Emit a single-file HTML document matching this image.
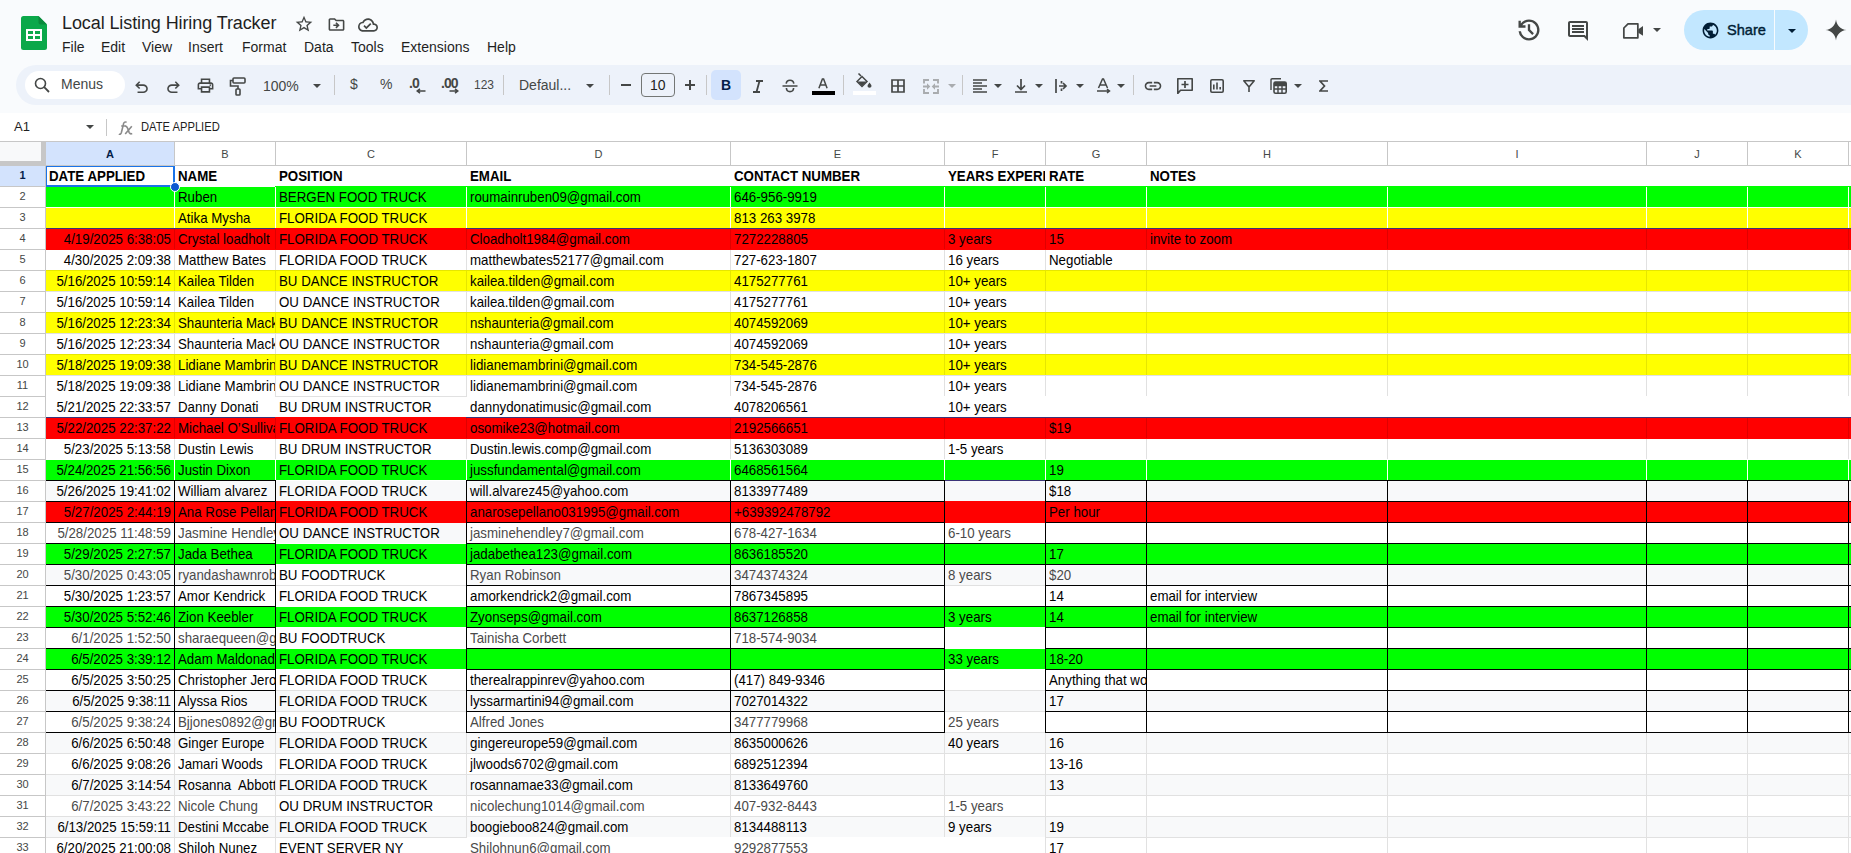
<!DOCTYPE html>
<html><head><meta charset="utf-8">
<style>
*{margin:0;padding:0;box-sizing:border-box}
html,body{width:1851px;height:853px;overflow:hidden;background:#fff;font-family:"Liberation Sans",sans-serif;position:relative}
.abs{position:absolute}
#top{position:absolute;left:0;top:0;width:1851px;height:113px;background:#f9fbfd}
.title{position:absolute;left:62px;top:13px;font-size:18px;color:#1f1f1f;white-space:nowrap;letter-spacing:-0.1px}
.menu{position:absolute;top:39px;font-size:14px;color:#1f1f1f;white-space:nowrap}
.ico{position:absolute}
#tb{position:absolute;left:16px;top:65px;width:1860px;height:40px;background:#edf2fa;border-radius:20px}
.tt{position:absolute;font-size:14px;color:#444746;white-space:nowrap}
.div{position:absolute;width:1px;height:20px;top:75px;background:#c7c7c7}
.tri{position:absolute;width:0;height:0;border-left:4.5px solid transparent;border-right:4.5px solid transparent;border-top:4.5px solid #444746;margin-left:0.5px}
#fb{position:absolute;left:0;top:113px;width:1851px;height:28px;background:#fff}
.rh{position:absolute;left:0;width:45px;font-size:11px;text-align:center;line-height:18px}
.strip{position:absolute;left:46px;width:1805px}
.hl{position:absolute;left:46px;width:1805px;height:1px}
.vl{position:absolute;width:1px}
.c{position:absolute;overflow:hidden;white-space:nowrap;font-size:13.3px;color:#000;line-height:20px;padding:0 3px 0 3px}
.c span{display:inline-block;position:relative;top:1px;transform:scaleY(1.08);transform-origin:0 14.5px}
.ch{position:absolute;top:142px;height:23px;font-size:11px;text-align:center;line-height:23px;padding-top:1px}
.chl{position:absolute;top:142px;width:1px;height:23px;background:#c7c7c7}
</style></head><body>
<div id="top"></div>
<!-- sheets logo -->
<svg class="ico" style="left:21px;top:16px" width="26" height="34" viewBox="0 0 26 34">
<path d="M2.5 0H17.5L26 8.5V31.5Q26 34 23.5 34H2.5Q0 34 0 31.5V2.5Q0 0 2.5 0Z" fill="#0ba84a"/>
<path d="M17.5 0V6.5Q17.5 8.5 19.5 8.5H26Z" fill="#0a8a3c"/>
<rect x="5" y="13" width="16" height="12" fill="#fff"/>
<rect x="7" y="15" width="5" height="3" fill="#0ba84a"/><rect x="14" y="15" width="5" height="3" fill="#0ba84a"/>
<rect x="7" y="20" width="5" height="3" fill="#0ba84a"/><rect x="14" y="20" width="5" height="3" fill="#0ba84a"/>
</svg>
<div class="title">Local Listing Hiring Tracker</div>
<!-- star / folder / cloud -->
<svg class="ico" style="left:294px;top:14px" width="20" height="20" viewBox="0 0 24 24"><path fill="#444746" d="M22 9.24l-7.19-.62L12 2 9.19 8.63 2 9.24l5.46 4.73L5.82 21 12 17.27 18.18 21l-1.63-7.03L22 9.24zM12 15.4l-3.76 2.27 1-4.28-3.32-2.88 4.38-.38L12 6.1l1.71 4.04 4.38.38-3.32 2.88 1 4.28L12 15.4z"/></svg>
<svg class="ico" style="left:326.5px;top:15px" width="19" height="19" viewBox="0 0 24 24"><path fill="#444746" d="M20 6h-8l-2-2H4c-1.1 0-1.99.9-1.99 2L2 18c0 1.1.9 2 2 2h16c1.1 0 2-.9 2-2V8c0-1.1-.9-2-2-2zm0 12H4V6h5.17l2 2H20v10zm-7.84-6H8v2h4.16l-1.59 1.59L11.99 17 16 13.01 11.99 9l-1.41 1.41L12.16 12z"/></svg>
<svg class="ico" style="left:358px;top:15px" width="20" height="20" viewBox="0 0 24 24"><path fill="#444746" d="M19.35 10.04C18.67 6.59 15.64 4 12 4 9.11 4 6.6 5.64 5.350 8.04 2.34 8.36 0 10.91 0 14c0 3.31 2.690 6 6 6h13c2.76 0 5-2.24 5-5 0-2.64-2.05-4.78-4.65-4.96zM19 18H6c-2.21 0-4-1.79-4-4 0-2.05 1.53-3.76 3.56-3.97l1.07-.11.5-.95C8.08 7.14 9.94 6 12 6c2.62 0 4.88 1.86 5.39 4.43l.3 1.5 1.53.11c1.56.1 2.78 1.41 2.78 2.96 0 1.65-1.35 3-3 3zm-9-3.82l-2.09-2.09L6.5 13.5 10 17l6.01-6.01-1.41-1.41z"/></svg>
<div class="menu" style="left:62px">File</div>
<div class="menu" style="left:101px">Edit</div>
<div class="menu" style="left:142px">View</div>
<div class="menu" style="left:188px">Insert</div>
<div class="menu" style="left:242px">Format</div>
<div class="menu" style="left:304px">Data</div>
<div class="menu" style="left:351px">Tools</div>
<div class="menu" style="left:401px">Extensions</div>
<div class="menu" style="left:487px">Help</div>
<!-- right top -->
<svg class="ico" style="left:1515px;top:16px" width="28" height="28" viewBox="0 -960 960 960"><path fill="#444746" d="M480-120q-138 0-240.5-91.5T122-440h82q14 104 92.5 172T480-200q117 0 198.5-81.5T760-480q0-117-81.5-198.5T480-760q-69 0-129 32t-101 88h110v80H120v-240h80v94q51-64 124.5-99T480-840q75 0 140.5 28.5t114 77q48.5 48.5 77 114T840-480q0 75-28.5 140.5t-77 114q-48.5 48.5-114 77T480-120Zm112-192L440-464v-216h80v184l128 128-56 56Z"/></svg>
<svg class="ico" style="left:1566px;top:19px" width="24" height="24" viewBox="0 0 24 24"><path fill="#444746" d="M21.99 4c0-1.1-.89-2-1.990-2H4c-1.1 0-2 .9-2 2v12c0 1.1.9 2 2 2h14l4 4-.01-18zM20 4v13.17L18.83 16H4V4h16zM6 12h12v2H6zm0-3h12v2H6zm0-3h12v2H6z"/></svg>
<svg class="ico" style="left:1622px;top:22px" width="22" height="18" viewBox="0 0 22 18"><path d="M6 1.85H15.85V15.85H1.85V6Z" fill="none" stroke="#444746" stroke-width="1.75" stroke-linejoin="round"/><path d="M16.3 7.2L21 4V13.8L16.3 10.8Z" fill="#444746"/></svg>
<div class="tri" style="left:1652px;top:28px"></div>
<div class="abs" style="left:1684px;top:10px;width:124px;height:40px;border-radius:20px;background:#c2e7ff"></div>
<div class="abs" style="left:1774px;top:10px;width:1px;height:40px;background:#f9fbfd"></div>
<svg class="ico" style="left:1701px;top:21px" width="19" height="19" viewBox="0 0 24 24"><path fill="#001d35" d="M12 2C6.48 2 2 6.48 2 12s4.48 10 10 10 10-4.48 10-10S17.52 2 12 2zm-1 17.930c-3.95-.49-7-3.85-7-7.93 0-.62.08-1.21.21-1.79L9 15v1c0 1.1.9 2 2 2v1.93zm6.9-2.54c-.26-.81-1-1.39-1.9-1.39h-1v-3c0-.55-.45-1-1-1H8v-2h2c.55 0 1-.45 1-1V7h2c1.1 0 2-.9 2-2v-.41c2.93 1.19 5 4.06 5 7.41 0 2.08-.8 3.97-2.1 5.39z"/></svg>
<div class="abs" style="left:1727px;top:22px;font-size:14.6px;color:#001d35;-webkit-text-stroke:0.4px #001d35;white-space:nowrap">Share</div>
<div class="tri" style="left:1787px;top:29px;border-top-color:#001d35"></div>
<svg class="ico" style="left:1824px;top:18px" width="24" height="24" viewBox="0 0 24 24"><path fill="#444746" d="M12 1.5C12.5 7.2 16.8 11.5 22.5 12 16.8 12.5 12.5 16.8 12 22.5 11.5 16.8 7.2 12.5 1.5 12 7.2 11.5 11.5 7.2 12 1.5Z"/></svg>

<!-- toolbar -->
<div id="tb"></div>
<div class="abs" style="left:25px;top:71px;width:100px;height:28px;border-radius:14px;background:#fff"></div>
<svg class="ico" style="left:34px;top:77px" width="16" height="16" viewBox="0 0 16 16"><circle cx="6.5" cy="6.5" r="5" fill="none" stroke="#444746" stroke-width="1.6"/><path d="M10.2 10.2L15 15" stroke="#444746" stroke-width="1.8"/></svg>
<div class="tt" style="left:61px;top:76px">Menus</div>
<svg class="ico" style="left:132px;top:78px" width="19" height="19" viewBox="0 -960 960 960"><path fill="#444746" d="M280-200v-80h284q63 0 109.5-40T720-420q0-60-46.5-100T564-560H312l104 104-56 56-200-200 200-200 56 56-104 104h252q97 0 166.5 63T800-420q0 94-69.5 157T564-200H280Z"/></svg>
<svg class="ico" style="left:164px;top:78px" width="19" height="19" viewBox="0 -960 960 960"><path fill="#444746" d="M396-200q-97 0-166.5-63T160-420q0-94 69.5-157T396-640h252L544-744l56-56 200 200-200 200-56-56 104-104H396q-63 0-109.5 40T240-420q0 60 46.5 100T396-280h284v80H396Z"/></svg>
<svg class="ico" style="left:196px;top:76px" width="19" height="19" viewBox="0 -960 960 960"><path fill="#444746" d="M640-640v-120H320v120h-80v-200h480v200h-80Zm-480 80h640-640Zm560 100q17 0 28.5-11.5T760-500q0-17-11.5-28.5T720-540q-17 0-28.5 11.5T680-500q0 17 11.5 28.5T720-460Zm-80 260v-160H320v160h320Zm80 80H240v-160H80v-240q0-51 35-85.5t85-34.5h560q51 0 85.5 34.5T880-520v240H720v160Zm80-240v-160q0-17-11.5-28.5T760-560H200q-17 0-28.5 11.5T160-520v160h80v-80h480v80h80Z"/></svg>
<svg class="ico" style="left:229px;top:77px" width="17" height="19" viewBox="0 0 17 19"><rect x="4" y="1" width="12" height="5" rx="1" fill="none" stroke="#444746" stroke-width="1.6"/><path d="M4 3.5H1.5V9H9V12" fill="none" stroke="#444746" stroke-width="1.6"/><rect x="7" y="12" width="4" height="6" rx="0.8" fill="none" stroke="#444746" stroke-width="1.6"/></svg>
<div class="tt" style="left:263px;top:78px">100%</div>
<div class="tri" style="left:312px;top:84px"></div>
<div class="div" style="left:334px"></div>
<div class="tt" style="left:350px;top:76px;font-size:14px">$</div>
<div class="tt" style="left:380px;top:76px;font-size:14px">%</div>
<div class="tt" style="left:409px;top:75px;font-size:14px;font-weight:bold;letter-spacing:-1px">.0</div>
<svg class="ico" style="left:416px;top:88px" width="10" height="6" viewBox="0 0 10 6"><path d="M9.5 3H2M4 0.8L1.2 3L4 5.2" fill="none" stroke="#444746" stroke-width="1.5"/></svg>
<div class="tt" style="left:441px;top:75px;font-size:14px;font-weight:bold;letter-spacing:-1px">.00</div>
<svg class="ico" style="left:449px;top:88px" width="10" height="6" viewBox="0 0 10 6"><path d="M0.5 3H8M6 0.8L8.8 3L6 5.2" fill="none" stroke="#444746" stroke-width="1.5"/></svg>
<div class="tt" style="left:474px;top:78px;font-size:12px">123</div>
<div class="div" style="left:503px"></div>
<div class="tt" style="left:519px;top:77px">Defaul...</div>
<div class="tri" style="left:585px;top:84px"></div>
<div class="div" style="left:609px"></div>
<div class="abs" style="left:621px;top:84px;width:10px;height:2px;background:#444746"></div>
<div class="abs" style="left:641px;top:73px;width:34px;height:24px;border:1px solid #747775;border-radius:4px"></div>
<div class="tt" style="left:650px;top:77px;color:#1f1f1f">10</div>
<div class="abs" style="left:685px;top:84px;width:10px;height:2px;background:#444746"></div>
<div class="abs" style="left:689px;top:80px;width:2px;height:10px;background:#444746"></div>
<div class="div" style="left:706px"></div>
<div class="abs" style="left:711px;top:70px;width:30px;height:30px;border-radius:5px;background:#d3e3fd"></div>
<div class="tt" style="left:721px;top:77px;font-size:14px;font-weight:bold;color:#041e49">B</div>
<svg class="ico" style="left:752px;top:80px" width="12" height="13" viewBox="0 0 12 13"><path d="M4 1H11M1 12H8M7.5 1L4.5 12" fill="none" stroke="#444746" stroke-width="1.8"/></svg>
<svg class="ico" style="left:781px;top:79px" width="18" height="14" viewBox="0 0 18 14"><path d="M1.5 7H16.5" stroke="#444746" stroke-width="1.5"/><path d="M5.2 4.6Q5.6 1.3 9 1.3Q12.4 1.3 12.8 4.6M5.4 9Q5.6 12.6 9 12.6Q12.4 12.6 12.6 9" fill="none" stroke="#444746" stroke-width="1.6"/></svg>
<svg class="ico" style="left:818px;top:78px" width="10" height="11" viewBox="0 0 10 11"><path d="M0.9 10.3L4.4 0.9H5.6L9.1 10.3M2.3 7H7.7" fill="none" stroke="#444746" stroke-width="1.5"/></svg>
<div class="abs" style="left:812px;top:91px;width:23px;height:4px;background:#000"></div>
<div class="div" style="left:843px"></div>
<svg class="ico" style="left:855px;top:73px" width="17" height="16" viewBox="0 0 17 16"><path d="M3.5 0.5L6 3M2 8.5L7 3.5L12 8.5L7 13.5Z" fill="none" stroke="#444746" stroke-width="1.5"/><path d="M2.5 8.5H11.5L7 13Z" fill="#444746"/><path d="M14.5 9.5Q16.5 12 16.5 13Q16.5 14.8 14.5 14.8Q12.5 14.8 12.5 13Q12.5 12 14.5 9.5Z" fill="#444746"/></svg>
<div class="abs" style="left:853px;top:91px;width:23px;height:4px;background:#fff"></div>
<svg class="ico" style="left:891px;top:79px" width="14" height="14" viewBox="0 0 14 14"><path d="M1 1H13V13H1ZM7 1V13M1 7H13" fill="none" stroke="#444746" stroke-width="1.7"/></svg>
<svg class="ico" style="left:923px;top:79px" width="16" height="15" viewBox="0 0 16 15"><path d="M6 1H1V4.5M1 10V14H6M10 1H15V4.5M15 10V14H10M0 7.5H4.5M16 7.5H11.5" fill="none" stroke="#a9acaf" stroke-width="1.9"/><path d="M4 4.2L7.3 7.5L4 10.8ZM12 4.2L8.7 7.5L12 10.8Z" fill="#a9acaf"/></svg>
<div class="tri" style="left:947px;top:84px;border-top-color:#a9acaf"></div>
<div class="div" style="left:962px"></div>
<svg class="ico" style="left:973px;top:79px" width="14" height="14" viewBox="0 0 14 14"><path d="M0 1H14M0 4H9M0 7H14M0 10H9M0 13H14" stroke="#444746" stroke-width="1.6"/></svg>
<div class="tri" style="left:993px;top:84px"></div>
<svg class="ico" style="left:1015px;top:79px" width="12" height="14" viewBox="0 0 12 14"><path d="M6 0V10M2 6.5L6 10.5L10 6.5M0 13H12" fill="none" stroke="#444746" stroke-width="1.7"/></svg>
<div class="tri" style="left:1034px;top:84px"></div>
<svg class="ico" style="left:1055px;top:79px" width="13" height="14" viewBox="0 0 13 14"><path d="M1 0V14" stroke="#444746" stroke-width="1.7"/><path d="M4 7H11M8 4L11 7L8 10" fill="none" stroke="#444746" stroke-width="1.7"/><path d="M6.5 2V4.5M6.5 9.5V12" stroke="#444746" stroke-width="1.7"/></svg>
<div class="tri" style="left:1075px;top:84px"></div>
<svg class="ico" style="left:1097px;top:78px" width="14" height="16" viewBox="0 0 14 16"><path d="M1.5 10L5.5 1H6.5L10.5 10M3 7H9" fill="none" stroke="#444746" stroke-width="1.5"/><path d="M0 13H12M10 11L12.5 13L10 15" fill="none" stroke="#444746" stroke-width="1.5"/></svg>
<div class="tri" style="left:1116px;top:84px"></div>
<div class="div" style="left:1133px"></div>
<svg class="ico" style="left:1143px;top:76px" width="20" height="20" viewBox="0 0 24 24"><path fill="#444746" d="M3.9 12c0-1.71 1.39-3.1 3.1-3.1h4V7H7c-2.76 0-5 2.24-5 5s2.24 5 5 5h4v-1.9H7c-1.71 0-3.1-1.39-3.1-3.1zM8 13h8v-2H8v2zm9-6h-4v1.9h4c1.71 0 3.1 1.39 3.1 3.1s-1.39 3.1-3.1 3.1h-4V17h4c2.76 0 5-2.24 5-5s-2.24-5-5-5z"/></svg>
<svg class="ico" style="left:1177px;top:78px" width="16" height="16" viewBox="0 0 16 16"><path d="M0.8 15.5V0.8H15.2V12.2H3.5Z" fill="none" stroke="#444746" stroke-width="1.6" stroke-linejoin="round"/><path d="M8 3V10M4.5 6.5H11.5" stroke="#444746" stroke-width="1.7"/></svg>
<svg class="ico" style="left:1210px;top:79px" width="14" height="14" viewBox="0 0 14 14"><rect x="0.8" y="0.8" width="12.4" height="12.4" rx="1.2" fill="none" stroke="#444746" stroke-width="1.6"/><path d="M3.8 5.5V10.5M7 3.5V10.5M10.2 8V10.5" stroke="#444746" stroke-width="1.6"/></svg>
<svg class="ico" style="left:1243px;top:80px" width="12" height="12" viewBox="0 0 12 12"><path d="M0.8 0.8H11.2L6 7ZM6 7V12" fill="none" stroke="#444746" stroke-width="1.6" stroke-linejoin="round"/></svg>
<svg class="ico" style="left:1270px;top:78px" width="17" height="16" viewBox="0 0 17 16"><path d="M1 12V2Q1 0.8 2.2 0.8H11" fill="none" stroke="#444746" stroke-width="1.4"/><rect x="4" y="4" width="12.2" height="11.2" rx="1.5" fill="none" stroke="#444746" stroke-width="1.6"/><path d="M4 7.5H16M4 11H16M8 7.5V15M12 7.5V15" stroke="#444746" stroke-width="1.4"/><rect x="4" y="4" width="12" height="3.5" fill="#444746"/></svg>
<div class="tri" style="left:1293px;top:84px"></div>
<svg class="ico" style="left:1319px;top:80px" width="9" height="12" viewBox="0 0 9 12"><path d="M9 1H1L5.5 6L1 11H9" fill="none" stroke="#444746" stroke-width="1.7"/></svg>

<!-- formula bar -->
<div id="fb"></div>
<div class="abs" style="left:14px;top:119px;font-size:13px;color:#1f1f1f">A1</div>
<div class="tri" style="left:85px;top:125px"></div>
<div class="abs" style="left:106px;top:119px;width:1px;height:17px;background:#c7c7c7"></div>
<svg class="ico" style="left:118px;top:121px" width="15" height="14" viewBox="0 0 15 14"><path d="M0.8 13.2Q2.6 14 3.4 11.5L5.6 2.6Q6.3 0.4 8.6 1.2M3.2 5H7.6" fill="none" stroke="#8a8a8a" stroke-width="1.6"/><path d="M7 5.2Q8.6 4.6 9.6 7.2L11.2 11.6Q12.2 13.4 14.2 12.6M13.8 5.2L7.2 13" fill="none" stroke="#8a8a8a" stroke-width="1.6"/></svg>
<div class="abs" style="left:141px;top:121px;font-size:11.2px;color:#1f1f1f;white-space:nowrap;transform:scaleY(1.12);transform-origin:0 10px">DATE APPLIED</div>

<!-- header area -->
<div class="abs" style="left:0;top:141px;width:1851px;height:1px;background:#c7c7c7"></div>
<div class="abs" style="left:0;top:142px;width:41px;height:19px;background:#f8f9fa"></div>
<div class="abs" style="left:41px;top:142px;width:5px;height:24px;background:#c7c7c7"></div>
<div class="abs" style="left:0;top:161px;width:46px;height:5px;background:#c7c7c7"></div>
<div class="rh" style="top:166px;height:20px;background:#d3e3fd;color:#041e49;font-weight:bold">1</div>
<div class="abs" style="left:0;top:186px;width:45px;height:1px;background:#c7c7c7"></div>
<div class="rh" style="top:187px;height:20px;background:#ffffff;color:#444746;font-weight:normal">2</div>
<div class="abs" style="left:0;top:207px;width:45px;height:1px;background:#c7c7c7"></div>
<div class="rh" style="top:208px;height:20px;background:#ffffff;color:#444746;font-weight:normal">3</div>
<div class="abs" style="left:0;top:228px;width:45px;height:1px;background:#c7c7c7"></div>
<div class="rh" style="top:229px;height:20px;background:#ffffff;color:#444746;font-weight:normal">4</div>
<div class="abs" style="left:0;top:249px;width:45px;height:1px;background:#c7c7c7"></div>
<div class="rh" style="top:250px;height:20px;background:#ffffff;color:#444746;font-weight:normal">5</div>
<div class="abs" style="left:0;top:270px;width:45px;height:1px;background:#c7c7c7"></div>
<div class="rh" style="top:271px;height:20px;background:#ffffff;color:#444746;font-weight:normal">6</div>
<div class="abs" style="left:0;top:291px;width:45px;height:1px;background:#c7c7c7"></div>
<div class="rh" style="top:292px;height:20px;background:#ffffff;color:#444746;font-weight:normal">7</div>
<div class="abs" style="left:0;top:312px;width:45px;height:1px;background:#c7c7c7"></div>
<div class="rh" style="top:313px;height:20px;background:#ffffff;color:#444746;font-weight:normal">8</div>
<div class="abs" style="left:0;top:333px;width:45px;height:1px;background:#c7c7c7"></div>
<div class="rh" style="top:334px;height:20px;background:#ffffff;color:#444746;font-weight:normal">9</div>
<div class="abs" style="left:0;top:354px;width:45px;height:1px;background:#c7c7c7"></div>
<div class="rh" style="top:355px;height:20px;background:#ffffff;color:#444746;font-weight:normal">10</div>
<div class="abs" style="left:0;top:375px;width:45px;height:1px;background:#c7c7c7"></div>
<div class="rh" style="top:376px;height:20px;background:#ffffff;color:#444746;font-weight:normal">11</div>
<div class="abs" style="left:0;top:396px;width:45px;height:1px;background:#c7c7c7"></div>
<div class="rh" style="top:397px;height:20px;background:#ffffff;color:#444746;font-weight:normal">12</div>
<div class="abs" style="left:0;top:417px;width:45px;height:1px;background:#c7c7c7"></div>
<div class="rh" style="top:418px;height:20px;background:#ffffff;color:#444746;font-weight:normal">13</div>
<div class="abs" style="left:0;top:438px;width:45px;height:1px;background:#c7c7c7"></div>
<div class="rh" style="top:439px;height:20px;background:#ffffff;color:#444746;font-weight:normal">14</div>
<div class="abs" style="left:0;top:459px;width:45px;height:1px;background:#c7c7c7"></div>
<div class="rh" style="top:460px;height:20px;background:#ffffff;color:#444746;font-weight:normal">15</div>
<div class="abs" style="left:0;top:480px;width:45px;height:1px;background:#c7c7c7"></div>
<div class="rh" style="top:481px;height:20px;background:#ffffff;color:#444746;font-weight:normal">16</div>
<div class="abs" style="left:0;top:501px;width:45px;height:1px;background:#c7c7c7"></div>
<div class="rh" style="top:502px;height:20px;background:#ffffff;color:#444746;font-weight:normal">17</div>
<div class="abs" style="left:0;top:522px;width:45px;height:1px;background:#c7c7c7"></div>
<div class="rh" style="top:523px;height:20px;background:#ffffff;color:#444746;font-weight:normal">18</div>
<div class="abs" style="left:0;top:543px;width:45px;height:1px;background:#c7c7c7"></div>
<div class="rh" style="top:544px;height:20px;background:#ffffff;color:#444746;font-weight:normal">19</div>
<div class="abs" style="left:0;top:564px;width:45px;height:1px;background:#c7c7c7"></div>
<div class="rh" style="top:565px;height:20px;background:#ffffff;color:#444746;font-weight:normal">20</div>
<div class="abs" style="left:0;top:585px;width:45px;height:1px;background:#c7c7c7"></div>
<div class="rh" style="top:586px;height:20px;background:#ffffff;color:#444746;font-weight:normal">21</div>
<div class="abs" style="left:0;top:606px;width:45px;height:1px;background:#c7c7c7"></div>
<div class="rh" style="top:607px;height:20px;background:#ffffff;color:#444746;font-weight:normal">22</div>
<div class="abs" style="left:0;top:627px;width:45px;height:1px;background:#c7c7c7"></div>
<div class="rh" style="top:628px;height:20px;background:#ffffff;color:#444746;font-weight:normal">23</div>
<div class="abs" style="left:0;top:648px;width:45px;height:1px;background:#c7c7c7"></div>
<div class="rh" style="top:649px;height:20px;background:#ffffff;color:#444746;font-weight:normal">24</div>
<div class="abs" style="left:0;top:669px;width:45px;height:1px;background:#c7c7c7"></div>
<div class="rh" style="top:670px;height:20px;background:#ffffff;color:#444746;font-weight:normal">25</div>
<div class="abs" style="left:0;top:690px;width:45px;height:1px;background:#c7c7c7"></div>
<div class="rh" style="top:691px;height:20px;background:#ffffff;color:#444746;font-weight:normal">26</div>
<div class="abs" style="left:0;top:711px;width:45px;height:1px;background:#c7c7c7"></div>
<div class="rh" style="top:712px;height:20px;background:#ffffff;color:#444746;font-weight:normal">27</div>
<div class="abs" style="left:0;top:732px;width:45px;height:1px;background:#c7c7c7"></div>
<div class="rh" style="top:733px;height:20px;background:#ffffff;color:#444746;font-weight:normal">28</div>
<div class="abs" style="left:0;top:753px;width:45px;height:1px;background:#c7c7c7"></div>
<div class="rh" style="top:754px;height:20px;background:#ffffff;color:#444746;font-weight:normal">29</div>
<div class="abs" style="left:0;top:774px;width:45px;height:1px;background:#c7c7c7"></div>
<div class="rh" style="top:775px;height:20px;background:#ffffff;color:#444746;font-weight:normal">30</div>
<div class="abs" style="left:0;top:795px;width:45px;height:1px;background:#c7c7c7"></div>
<div class="rh" style="top:796px;height:20px;background:#ffffff;color:#444746;font-weight:normal">31</div>
<div class="abs" style="left:0;top:816px;width:45px;height:1px;background:#c7c7c7"></div>
<div class="rh" style="top:817px;height:20px;background:#ffffff;color:#444746;font-weight:normal">32</div>
<div class="abs" style="left:0;top:837px;width:45px;height:1px;background:#c7c7c7"></div>
<div class="rh" style="top:838px;height:20px;background:#ffffff;color:#444746;font-weight:normal">33</div>
<div class="abs" style="left:0;top:858px;width:45px;height:1px;background:#c7c7c7"></div>
<div class="abs" style="left:46px;top:187px;width:128px;height:20px;background:#00ff00"></div>
<div class="abs" style="left:175px;top:187px;width:100px;height:20px;background:#00ff00"></div>
<div class="abs" style="left:276px;top:187px;width:190px;height:20px;background:#00ff00"></div>
<div class="abs" style="left:467px;top:187px;width:263px;height:20px;background:#00ff00"></div>
<div class="abs" style="left:731px;top:187px;width:213px;height:20px;background:#00ff00"></div>
<div class="abs" style="left:945px;top:187px;width:100px;height:20px;background:#00ff00"></div>
<div class="abs" style="left:1046px;top:187px;width:100px;height:20px;background:#00ff00"></div>
<div class="abs" style="left:1147px;top:187px;width:240px;height:20px;background:#00ff00"></div>
<div class="abs" style="left:1388px;top:187px;width:258px;height:20px;background:#00ff00"></div>
<div class="abs" style="left:1647px;top:187px;width:100px;height:20px;background:#00ff00"></div>
<div class="abs" style="left:1748px;top:187px;width:100px;height:20px;background:#00ff00"></div>
<div class="abs" style="left:1849px;top:187px;width:2px;height:20px;background:#00ff00"></div>
<div class="abs" style="left:46px;top:208px;width:128px;height:20px;background:#ffff00"></div>
<div class="abs" style="left:175px;top:208px;width:100px;height:20px;background:#ffff00"></div>
<div class="abs" style="left:276px;top:208px;width:190px;height:20px;background:#ffff00"></div>
<div class="abs" style="left:467px;top:208px;width:263px;height:20px;background:#ffff00"></div>
<div class="abs" style="left:731px;top:208px;width:213px;height:20px;background:#ffff00"></div>
<div class="abs" style="left:945px;top:208px;width:100px;height:20px;background:#ffff00"></div>
<div class="abs" style="left:1046px;top:208px;width:100px;height:20px;background:#ffff00"></div>
<div class="abs" style="left:1147px;top:208px;width:240px;height:20px;background:#ffff00"></div>
<div class="abs" style="left:1388px;top:208px;width:258px;height:20px;background:#ffff00"></div>
<div class="abs" style="left:1647px;top:208px;width:100px;height:20px;background:#ffff00"></div>
<div class="abs" style="left:1748px;top:208px;width:100px;height:20px;background:#ffff00"></div>
<div class="abs" style="left:1849px;top:208px;width:2px;height:20px;background:#ffff00"></div>
<div class="abs" style="left:46px;top:229px;width:128px;height:20px;background:#ff0000"></div>
<div class="abs" style="left:175px;top:229px;width:100px;height:20px;background:#ff0000"></div>
<div class="abs" style="left:276px;top:229px;width:190px;height:20px;background:#ff0000"></div>
<div class="abs" style="left:467px;top:229px;width:263px;height:20px;background:#ff0000"></div>
<div class="abs" style="left:731px;top:229px;width:213px;height:20px;background:#ff0000"></div>
<div class="abs" style="left:945px;top:229px;width:100px;height:20px;background:#ff0000"></div>
<div class="abs" style="left:1046px;top:229px;width:100px;height:20px;background:#ff0000"></div>
<div class="abs" style="left:1147px;top:229px;width:240px;height:20px;background:#ff0000"></div>
<div class="abs" style="left:1388px;top:229px;width:258px;height:20px;background:#ff0000"></div>
<div class="abs" style="left:1647px;top:229px;width:100px;height:20px;background:#ff0000"></div>
<div class="abs" style="left:1748px;top:229px;width:100px;height:20px;background:#ff0000"></div>
<div class="abs" style="left:1849px;top:229px;width:2px;height:20px;background:#ff0000"></div>
<div class="abs" style="left:46px;top:271px;width:128px;height:20px;background:#ffff00"></div>
<div class="abs" style="left:175px;top:271px;width:100px;height:20px;background:#ffff00"></div>
<div class="abs" style="left:276px;top:271px;width:190px;height:20px;background:#ffff00"></div>
<div class="abs" style="left:467px;top:271px;width:263px;height:20px;background:#ffff00"></div>
<div class="abs" style="left:731px;top:271px;width:213px;height:20px;background:#ffff00"></div>
<div class="abs" style="left:945px;top:271px;width:100px;height:20px;background:#ffff00"></div>
<div class="abs" style="left:1046px;top:271px;width:100px;height:20px;background:#ffff00"></div>
<div class="abs" style="left:1147px;top:271px;width:240px;height:20px;background:#ffff00"></div>
<div class="abs" style="left:1388px;top:271px;width:258px;height:20px;background:#ffff00"></div>
<div class="abs" style="left:1647px;top:271px;width:100px;height:20px;background:#ffff00"></div>
<div class="abs" style="left:1748px;top:271px;width:100px;height:20px;background:#ffff00"></div>
<div class="abs" style="left:1849px;top:271px;width:2px;height:20px;background:#ffff00"></div>
<div class="abs" style="left:46px;top:313px;width:128px;height:20px;background:#ffff00"></div>
<div class="abs" style="left:175px;top:313px;width:100px;height:20px;background:#ffff00"></div>
<div class="abs" style="left:276px;top:313px;width:190px;height:20px;background:#ffff00"></div>
<div class="abs" style="left:467px;top:313px;width:263px;height:20px;background:#ffff00"></div>
<div class="abs" style="left:731px;top:313px;width:213px;height:20px;background:#ffff00"></div>
<div class="abs" style="left:945px;top:313px;width:100px;height:20px;background:#ffff00"></div>
<div class="abs" style="left:1046px;top:313px;width:100px;height:20px;background:#ffff00"></div>
<div class="abs" style="left:1147px;top:313px;width:240px;height:20px;background:#ffff00"></div>
<div class="abs" style="left:1388px;top:313px;width:258px;height:20px;background:#ffff00"></div>
<div class="abs" style="left:1647px;top:313px;width:100px;height:20px;background:#ffff00"></div>
<div class="abs" style="left:1748px;top:313px;width:100px;height:20px;background:#ffff00"></div>
<div class="abs" style="left:1849px;top:313px;width:2px;height:20px;background:#ffff00"></div>
<div class="abs" style="left:46px;top:355px;width:128px;height:20px;background:#ffff00"></div>
<div class="abs" style="left:175px;top:355px;width:100px;height:20px;background:#ffff00"></div>
<div class="abs" style="left:276px;top:355px;width:190px;height:20px;background:#ffff00"></div>
<div class="abs" style="left:467px;top:355px;width:263px;height:20px;background:#ffff00"></div>
<div class="abs" style="left:731px;top:355px;width:213px;height:20px;background:#ffff00"></div>
<div class="abs" style="left:945px;top:355px;width:100px;height:20px;background:#ffff00"></div>
<div class="abs" style="left:1046px;top:355px;width:100px;height:20px;background:#ffff00"></div>
<div class="abs" style="left:1147px;top:355px;width:240px;height:20px;background:#ffff00"></div>
<div class="abs" style="left:1388px;top:355px;width:258px;height:20px;background:#ffff00"></div>
<div class="abs" style="left:1647px;top:355px;width:100px;height:20px;background:#ffff00"></div>
<div class="abs" style="left:1748px;top:355px;width:100px;height:20px;background:#ffff00"></div>
<div class="abs" style="left:1849px;top:355px;width:2px;height:20px;background:#ffff00"></div>
<div class="abs" style="left:46px;top:418px;width:128px;height:20px;background:#ff0000"></div>
<div class="abs" style="left:175px;top:418px;width:100px;height:20px;background:#ff0000"></div>
<div class="abs" style="left:276px;top:418px;width:190px;height:20px;background:#ff0000"></div>
<div class="abs" style="left:467px;top:418px;width:263px;height:20px;background:#ff0000"></div>
<div class="abs" style="left:731px;top:418px;width:213px;height:20px;background:#ff0000"></div>
<div class="abs" style="left:945px;top:418px;width:100px;height:20px;background:#ff0000"></div>
<div class="abs" style="left:1046px;top:418px;width:100px;height:20px;background:#ff0000"></div>
<div class="abs" style="left:1147px;top:418px;width:240px;height:20px;background:#ff0000"></div>
<div class="abs" style="left:1388px;top:418px;width:258px;height:20px;background:#ff0000"></div>
<div class="abs" style="left:1647px;top:418px;width:100px;height:20px;background:#ff0000"></div>
<div class="abs" style="left:1748px;top:418px;width:100px;height:20px;background:#ff0000"></div>
<div class="abs" style="left:1849px;top:418px;width:2px;height:20px;background:#ff0000"></div>
<div class="abs" style="left:46px;top:460px;width:128px;height:20px;background:#00ff00"></div>
<div class="abs" style="left:175px;top:460px;width:100px;height:20px;background:#00ff00"></div>
<div class="abs" style="left:276px;top:460px;width:190px;height:20px;background:#00ff00"></div>
<div class="abs" style="left:467px;top:460px;width:263px;height:20px;background:#00ff00"></div>
<div class="abs" style="left:731px;top:460px;width:213px;height:20px;background:#00ff00"></div>
<div class="abs" style="left:945px;top:460px;width:100px;height:20px;background:#00ff00"></div>
<div class="abs" style="left:1046px;top:460px;width:100px;height:20px;background:#00ff00"></div>
<div class="abs" style="left:1147px;top:460px;width:240px;height:20px;background:#00ff00"></div>
<div class="abs" style="left:1388px;top:460px;width:258px;height:20px;background:#00ff00"></div>
<div class="abs" style="left:1647px;top:460px;width:100px;height:20px;background:#00ff00"></div>
<div class="abs" style="left:1748px;top:460px;width:100px;height:20px;background:#00ff00"></div>
<div class="abs" style="left:1849px;top:460px;width:2px;height:20px;background:#00ff00"></div>
<div class="abs" style="left:46px;top:481px;width:128px;height:20px;background:#f8f9fa"></div>
<div class="abs" style="left:175px;top:481px;width:100px;height:20px;background:#f8f9fa"></div>
<div class="abs" style="left:276px;top:481px;width:190px;height:20px;background:#f8f9fa"></div>
<div class="abs" style="left:467px;top:481px;width:263px;height:20px;background:#f8f9fa"></div>
<div class="abs" style="left:731px;top:481px;width:213px;height:20px;background:#f8f9fa"></div>
<div class="abs" style="left:945px;top:481px;width:100px;height:20px;background:#f8f9fa"></div>
<div class="abs" style="left:1046px;top:481px;width:100px;height:20px;background:#f8f9fa"></div>
<div class="abs" style="left:1147px;top:481px;width:240px;height:20px;background:#f8f9fa"></div>
<div class="abs" style="left:1388px;top:481px;width:258px;height:20px;background:#f8f9fa"></div>
<div class="abs" style="left:1647px;top:481px;width:100px;height:20px;background:#f8f9fa"></div>
<div class="abs" style="left:1748px;top:481px;width:100px;height:20px;background:#f8f9fa"></div>
<div class="abs" style="left:1849px;top:481px;width:2px;height:20px;background:#f8f9fa"></div>
<div class="abs" style="left:46px;top:502px;width:128px;height:20px;background:#ff0000"></div>
<div class="abs" style="left:175px;top:502px;width:100px;height:20px;background:#ff0000"></div>
<div class="abs" style="left:276px;top:502px;width:190px;height:20px;background:#ff0000"></div>
<div class="abs" style="left:467px;top:502px;width:263px;height:20px;background:#ff0000"></div>
<div class="abs" style="left:731px;top:502px;width:213px;height:20px;background:#ff0000"></div>
<div class="abs" style="left:945px;top:502px;width:100px;height:20px;background:#ff0000"></div>
<div class="abs" style="left:1046px;top:502px;width:100px;height:20px;background:#ff0000"></div>
<div class="abs" style="left:1147px;top:502px;width:240px;height:20px;background:#ff0000"></div>
<div class="abs" style="left:1388px;top:502px;width:258px;height:20px;background:#ff0000"></div>
<div class="abs" style="left:1647px;top:502px;width:100px;height:20px;background:#ff0000"></div>
<div class="abs" style="left:1748px;top:502px;width:100px;height:20px;background:#ff0000"></div>
<div class="abs" style="left:1849px;top:502px;width:2px;height:20px;background:#ff0000"></div>
<div class="abs" style="left:276px;top:523px;width:190px;height:20px;background:#f8f9fa"></div>
<div class="abs" style="left:46px;top:544px;width:128px;height:20px;background:#00ff00"></div>
<div class="abs" style="left:175px;top:544px;width:100px;height:20px;background:#00ff00"></div>
<div class="abs" style="left:276px;top:544px;width:190px;height:20px;background:#00ff00"></div>
<div class="abs" style="left:467px;top:544px;width:263px;height:20px;background:#00ff00"></div>
<div class="abs" style="left:731px;top:544px;width:213px;height:20px;background:#00ff00"></div>
<div class="abs" style="left:945px;top:544px;width:100px;height:20px;background:#00ff00"></div>
<div class="abs" style="left:1046px;top:544px;width:100px;height:20px;background:#00ff00"></div>
<div class="abs" style="left:1147px;top:544px;width:240px;height:20px;background:#00ff00"></div>
<div class="abs" style="left:1388px;top:544px;width:258px;height:20px;background:#00ff00"></div>
<div class="abs" style="left:1647px;top:544px;width:100px;height:20px;background:#00ff00"></div>
<div class="abs" style="left:1748px;top:544px;width:100px;height:20px;background:#00ff00"></div>
<div class="abs" style="left:1849px;top:544px;width:2px;height:20px;background:#00ff00"></div>
<div class="abs" style="left:46px;top:565px;width:128px;height:20px;background:#f8f9fa"></div>
<div class="abs" style="left:175px;top:565px;width:100px;height:20px;background:#f8f9fa"></div>
<div class="abs" style="left:467px;top:565px;width:263px;height:20px;background:#f8f9fa"></div>
<div class="abs" style="left:731px;top:565px;width:213px;height:20px;background:#f8f9fa"></div>
<div class="abs" style="left:945px;top:565px;width:100px;height:20px;background:#f8f9fa"></div>
<div class="abs" style="left:1046px;top:565px;width:100px;height:20px;background:#f8f9fa"></div>
<div class="abs" style="left:1147px;top:565px;width:240px;height:20px;background:#f8f9fa"></div>
<div class="abs" style="left:1388px;top:565px;width:258px;height:20px;background:#f8f9fa"></div>
<div class="abs" style="left:1647px;top:565px;width:100px;height:20px;background:#f8f9fa"></div>
<div class="abs" style="left:1748px;top:565px;width:100px;height:20px;background:#f8f9fa"></div>
<div class="abs" style="left:1849px;top:565px;width:2px;height:20px;background:#f8f9fa"></div>
<div class="abs" style="left:46px;top:607px;width:128px;height:20px;background:#00ff00"></div>
<div class="abs" style="left:175px;top:607px;width:100px;height:20px;background:#00ff00"></div>
<div class="abs" style="left:276px;top:607px;width:190px;height:20px;background:#00ff00"></div>
<div class="abs" style="left:467px;top:607px;width:263px;height:20px;background:#00ff00"></div>
<div class="abs" style="left:731px;top:607px;width:213px;height:20px;background:#00ff00"></div>
<div class="abs" style="left:945px;top:607px;width:100px;height:20px;background:#00ff00"></div>
<div class="abs" style="left:1046px;top:607px;width:100px;height:20px;background:#00ff00"></div>
<div class="abs" style="left:1147px;top:607px;width:240px;height:20px;background:#00ff00"></div>
<div class="abs" style="left:1388px;top:607px;width:258px;height:20px;background:#00ff00"></div>
<div class="abs" style="left:1647px;top:607px;width:100px;height:20px;background:#00ff00"></div>
<div class="abs" style="left:1748px;top:607px;width:100px;height:20px;background:#00ff00"></div>
<div class="abs" style="left:1849px;top:607px;width:2px;height:20px;background:#00ff00"></div>
<div class="abs" style="left:46px;top:649px;width:128px;height:20px;background:#00ff00"></div>
<div class="abs" style="left:175px;top:649px;width:100px;height:20px;background:#00ff00"></div>
<div class="abs" style="left:276px;top:649px;width:190px;height:20px;background:#00ff00"></div>
<div class="abs" style="left:467px;top:649px;width:263px;height:20px;background:#00ff00"></div>
<div class="abs" style="left:731px;top:649px;width:213px;height:20px;background:#00ff00"></div>
<div class="abs" style="left:945px;top:649px;width:100px;height:20px;background:#00ff00"></div>
<div class="abs" style="left:1046px;top:649px;width:100px;height:20px;background:#00ff00"></div>
<div class="abs" style="left:1147px;top:649px;width:240px;height:20px;background:#00ff00"></div>
<div class="abs" style="left:1388px;top:649px;width:258px;height:20px;background:#00ff00"></div>
<div class="abs" style="left:1647px;top:649px;width:100px;height:20px;background:#00ff00"></div>
<div class="abs" style="left:1748px;top:649px;width:100px;height:20px;background:#00ff00"></div>
<div class="abs" style="left:1849px;top:649px;width:2px;height:20px;background:#00ff00"></div>
<div class="abs" style="left:46px;top:691px;width:128px;height:20px;background:#f8f9fa"></div>
<div class="abs" style="left:175px;top:691px;width:100px;height:20px;background:#f8f9fa"></div>
<div class="abs" style="left:276px;top:691px;width:190px;height:20px;background:#f8f9fa"></div>
<div class="abs" style="left:467px;top:691px;width:263px;height:20px;background:#f8f9fa"></div>
<div class="abs" style="left:731px;top:691px;width:213px;height:20px;background:#f8f9fa"></div>
<div class="abs" style="left:945px;top:691px;width:100px;height:20px;background:#f8f9fa"></div>
<div class="abs" style="left:1046px;top:691px;width:100px;height:20px;background:#f8f9fa"></div>
<div class="abs" style="left:1147px;top:691px;width:240px;height:20px;background:#f8f9fa"></div>
<div class="abs" style="left:1388px;top:691px;width:258px;height:20px;background:#f8f9fa"></div>
<div class="abs" style="left:1647px;top:691px;width:100px;height:20px;background:#f8f9fa"></div>
<div class="abs" style="left:1748px;top:691px;width:100px;height:20px;background:#f8f9fa"></div>
<div class="abs" style="left:1849px;top:691px;width:2px;height:20px;background:#f8f9fa"></div>
<div class="abs" style="left:46px;top:733px;width:128px;height:20px;background:#f8f9fa"></div>
<div class="abs" style="left:175px;top:733px;width:100px;height:20px;background:#f8f9fa"></div>
<div class="abs" style="left:276px;top:733px;width:190px;height:20px;background:#f8f9fa"></div>
<div class="abs" style="left:467px;top:733px;width:263px;height:20px;background:#f8f9fa"></div>
<div class="abs" style="left:731px;top:733px;width:213px;height:20px;background:#f8f9fa"></div>
<div class="abs" style="left:945px;top:733px;width:100px;height:20px;background:#f8f9fa"></div>
<div class="abs" style="left:1046px;top:733px;width:100px;height:20px;background:#f8f9fa"></div>
<div class="abs" style="left:1147px;top:733px;width:240px;height:20px;background:#f8f9fa"></div>
<div class="abs" style="left:1388px;top:733px;width:258px;height:20px;background:#f8f9fa"></div>
<div class="abs" style="left:1647px;top:733px;width:100px;height:20px;background:#f8f9fa"></div>
<div class="abs" style="left:1748px;top:733px;width:100px;height:20px;background:#f8f9fa"></div>
<div class="abs" style="left:1849px;top:733px;width:2px;height:20px;background:#f8f9fa"></div>
<div class="abs" style="left:46px;top:775px;width:128px;height:20px;background:#f8f9fa"></div>
<div class="abs" style="left:175px;top:775px;width:100px;height:20px;background:#f8f9fa"></div>
<div class="abs" style="left:276px;top:775px;width:190px;height:20px;background:#f8f9fa"></div>
<div class="abs" style="left:467px;top:775px;width:263px;height:20px;background:#f8f9fa"></div>
<div class="abs" style="left:731px;top:775px;width:213px;height:20px;background:#f8f9fa"></div>
<div class="abs" style="left:945px;top:775px;width:100px;height:20px;background:#f8f9fa"></div>
<div class="abs" style="left:1046px;top:775px;width:100px;height:20px;background:#f8f9fa"></div>
<div class="abs" style="left:1147px;top:775px;width:240px;height:20px;background:#f8f9fa"></div>
<div class="abs" style="left:1388px;top:775px;width:258px;height:20px;background:#f8f9fa"></div>
<div class="abs" style="left:1647px;top:775px;width:100px;height:20px;background:#f8f9fa"></div>
<div class="abs" style="left:1748px;top:775px;width:100px;height:20px;background:#f8f9fa"></div>
<div class="abs" style="left:1849px;top:775px;width:2px;height:20px;background:#f8f9fa"></div>
<div class="abs" style="left:46px;top:817px;width:128px;height:20px;background:#f8f9fa"></div>
<div class="abs" style="left:175px;top:817px;width:100px;height:20px;background:#f8f9fa"></div>
<div class="abs" style="left:276px;top:817px;width:190px;height:20px;background:#f8f9fa"></div>
<div class="abs" style="left:467px;top:817px;width:263px;height:20px;background:#f8f9fa"></div>
<div class="abs" style="left:731px;top:817px;width:213px;height:20px;background:#f8f9fa"></div>
<div class="abs" style="left:945px;top:817px;width:100px;height:20px;background:#f8f9fa"></div>
<div class="abs" style="left:1046px;top:817px;width:100px;height:20px;background:#f8f9fa"></div>
<div class="abs" style="left:1147px;top:817px;width:240px;height:20px;background:#f8f9fa"></div>
<div class="abs" style="left:1388px;top:817px;width:258px;height:20px;background:#f8f9fa"></div>
<div class="abs" style="left:1647px;top:817px;width:100px;height:20px;background:#f8f9fa"></div>
<div class="abs" style="left:1748px;top:817px;width:100px;height:20px;background:#f8f9fa"></div>
<div class="abs" style="left:1849px;top:817px;width:2px;height:20px;background:#f8f9fa"></div>
<div class="abs" style="left:275px;top:186px;width:192px;height:1px;background:#00ff00"></div>
<div class="abs" style="left:466px;top:186px;width:265px;height:1px;background:#00ff00"></div>
<div class="abs" style="left:730px;top:186px;width:215px;height:1px;background:#00ff00"></div>
<div class="abs" style="left:944px;top:186px;width:102px;height:1px;background:#00ff00"></div>
<div class="abs" style="left:1045px;top:186px;width:102px;height:1px;background:#00ff00"></div>
<div class="abs" style="left:1146px;top:186px;width:242px;height:1px;background:#00ff00"></div>
<div class="abs" style="left:1387px;top:186px;width:260px;height:1px;background:#00ff00"></div>
<div class="abs" style="left:1646px;top:186px;width:102px;height:1px;background:#00ff00"></div>
<div class="abs" style="left:1747px;top:186px;width:102px;height:1px;background:#00ff00"></div>
<div class="abs" style="left:1848px;top:186px;width:4px;height:1px;background:#00ff00"></div>
<div class="abs" style="left:46px;top:228px;width:129px;height:1px;background:#3b3478"></div>
<div class="abs" style="left:174px;top:228px;width:102px;height:1px;background:#3b3478"></div>
<div class="abs" style="left:275px;top:228px;width:192px;height:1px;background:#ff0000"></div>
<div class="abs" style="left:466px;top:228px;width:265px;height:1px;background:#3b3478"></div>
<div class="abs" style="left:730px;top:228px;width:215px;height:1px;background:#3b3478"></div>
<div class="abs" style="left:944px;top:228px;width:102px;height:1px;background:#3b3478"></div>
<div class="abs" style="left:1045px;top:228px;width:102px;height:1px;background:#3b3478"></div>
<div class="abs" style="left:1146px;top:228px;width:242px;height:1px;background:#3b3478"></div>
<div class="abs" style="left:1387px;top:228px;width:260px;height:1px;background:#3b3478"></div>
<div class="abs" style="left:1646px;top:228px;width:102px;height:1px;background:#3b3478"></div>
<div class="abs" style="left:1747px;top:228px;width:102px;height:1px;background:#3b3478"></div>
<div class="abs" style="left:1848px;top:228px;width:4px;height:1px;background:#3b3478"></div>
<div class="abs" style="left:46px;top:249px;width:129px;height:1px;background:#ff0000"></div>
<div class="abs" style="left:174px;top:249px;width:102px;height:1px;background:#ff0000"></div>
<div class="abs" style="left:275px;top:249px;width:192px;height:1px;background:#ff0000"></div>
<div class="abs" style="left:466px;top:249px;width:265px;height:1px;background:#ff0000"></div>
<div class="abs" style="left:730px;top:249px;width:215px;height:1px;background:#ff0000"></div>
<div class="abs" style="left:944px;top:249px;width:102px;height:1px;background:#ff0000"></div>
<div class="abs" style="left:1045px;top:249px;width:102px;height:1px;background:#ff0000"></div>
<div class="abs" style="left:1146px;top:249px;width:242px;height:1px;background:#ff0000"></div>
<div class="abs" style="left:1387px;top:249px;width:260px;height:1px;background:#ff0000"></div>
<div class="abs" style="left:1646px;top:249px;width:102px;height:1px;background:#ff0000"></div>
<div class="abs" style="left:1747px;top:249px;width:102px;height:1px;background:#ff0000"></div>
<div class="abs" style="left:1848px;top:249px;width:4px;height:1px;background:#ff0000"></div>
<div class="abs" style="left:46px;top:270px;width:129px;height:1px;background:#e6e600"></div>
<div class="abs" style="left:174px;top:270px;width:102px;height:1px;background:#e6e600"></div>
<div class="abs" style="left:275px;top:270px;width:192px;height:1px;background:#e6e600"></div>
<div class="abs" style="left:466px;top:270px;width:265px;height:1px;background:#e6e600"></div>
<div class="abs" style="left:730px;top:270px;width:215px;height:1px;background:#e6e600"></div>
<div class="abs" style="left:944px;top:270px;width:102px;height:1px;background:#e6e600"></div>
<div class="abs" style="left:1045px;top:270px;width:102px;height:1px;background:#e6e600"></div>
<div class="abs" style="left:1146px;top:270px;width:242px;height:1px;background:#e6e600"></div>
<div class="abs" style="left:1387px;top:270px;width:260px;height:1px;background:#e6e600"></div>
<div class="abs" style="left:1646px;top:270px;width:102px;height:1px;background:#e6e600"></div>
<div class="abs" style="left:1747px;top:270px;width:102px;height:1px;background:#e6e600"></div>
<div class="abs" style="left:1848px;top:270px;width:4px;height:1px;background:#e6e600"></div>
<div class="abs" style="left:46px;top:291px;width:129px;height:1px;background:#e1e1e1"></div>
<div class="abs" style="left:174px;top:291px;width:102px;height:1px;background:#e1e1e1"></div>
<div class="abs" style="left:275px;top:291px;width:192px;height:1px;background:#e1e1e1"></div>
<div class="abs" style="left:466px;top:291px;width:265px;height:1px;background:#e1e1e1"></div>
<div class="abs" style="left:730px;top:291px;width:215px;height:1px;background:#e1e1e1"></div>
<div class="abs" style="left:944px;top:291px;width:102px;height:1px;background:#e1e1e1"></div>
<div class="abs" style="left:1045px;top:291px;width:102px;height:1px;background:#e1e1e1"></div>
<div class="abs" style="left:1146px;top:291px;width:242px;height:1px;background:#e1e1e1"></div>
<div class="abs" style="left:1387px;top:291px;width:260px;height:1px;background:#e1e1e1"></div>
<div class="abs" style="left:1646px;top:291px;width:102px;height:1px;background:#e1e1e1"></div>
<div class="abs" style="left:1747px;top:291px;width:102px;height:1px;background:#e1e1e1"></div>
<div class="abs" style="left:1848px;top:291px;width:4px;height:1px;background:#e1e1e1"></div>
<div class="abs" style="left:46px;top:312px;width:129px;height:1px;background:#e6e600"></div>
<div class="abs" style="left:174px;top:312px;width:102px;height:1px;background:#e6e600"></div>
<div class="abs" style="left:275px;top:312px;width:192px;height:1px;background:#e6e600"></div>
<div class="abs" style="left:466px;top:312px;width:265px;height:1px;background:#e6e600"></div>
<div class="abs" style="left:730px;top:312px;width:215px;height:1px;background:#e6e600"></div>
<div class="abs" style="left:944px;top:312px;width:102px;height:1px;background:#e6e600"></div>
<div class="abs" style="left:1045px;top:312px;width:102px;height:1px;background:#e6e600"></div>
<div class="abs" style="left:1146px;top:312px;width:242px;height:1px;background:#e6e600"></div>
<div class="abs" style="left:1387px;top:312px;width:260px;height:1px;background:#e6e600"></div>
<div class="abs" style="left:1646px;top:312px;width:102px;height:1px;background:#e6e600"></div>
<div class="abs" style="left:1747px;top:312px;width:102px;height:1px;background:#e6e600"></div>
<div class="abs" style="left:1848px;top:312px;width:4px;height:1px;background:#e6e600"></div>
<div class="abs" style="left:46px;top:333px;width:129px;height:1px;background:#e1e1e1"></div>
<div class="abs" style="left:174px;top:333px;width:102px;height:1px;background:#e1e1e1"></div>
<div class="abs" style="left:275px;top:333px;width:192px;height:1px;background:#e1e1e1"></div>
<div class="abs" style="left:466px;top:333px;width:265px;height:1px;background:#e1e1e1"></div>
<div class="abs" style="left:730px;top:333px;width:215px;height:1px;background:#e1e1e1"></div>
<div class="abs" style="left:944px;top:333px;width:102px;height:1px;background:#e1e1e1"></div>
<div class="abs" style="left:1045px;top:333px;width:102px;height:1px;background:#e1e1e1"></div>
<div class="abs" style="left:1146px;top:333px;width:242px;height:1px;background:#e1e1e1"></div>
<div class="abs" style="left:1387px;top:333px;width:260px;height:1px;background:#e1e1e1"></div>
<div class="abs" style="left:1646px;top:333px;width:102px;height:1px;background:#e1e1e1"></div>
<div class="abs" style="left:1747px;top:333px;width:102px;height:1px;background:#e1e1e1"></div>
<div class="abs" style="left:1848px;top:333px;width:4px;height:1px;background:#e1e1e1"></div>
<div class="abs" style="left:46px;top:354px;width:129px;height:1px;background:#e6e600"></div>
<div class="abs" style="left:174px;top:354px;width:102px;height:1px;background:#e6e600"></div>
<div class="abs" style="left:275px;top:354px;width:192px;height:1px;background:#e6e600"></div>
<div class="abs" style="left:466px;top:354px;width:265px;height:1px;background:#e6e600"></div>
<div class="abs" style="left:730px;top:354px;width:215px;height:1px;background:#e6e600"></div>
<div class="abs" style="left:944px;top:354px;width:102px;height:1px;background:#e6e600"></div>
<div class="abs" style="left:1045px;top:354px;width:102px;height:1px;background:#e6e600"></div>
<div class="abs" style="left:1146px;top:354px;width:242px;height:1px;background:#e6e600"></div>
<div class="abs" style="left:1387px;top:354px;width:260px;height:1px;background:#e6e600"></div>
<div class="abs" style="left:1646px;top:354px;width:102px;height:1px;background:#e6e600"></div>
<div class="abs" style="left:1747px;top:354px;width:102px;height:1px;background:#e6e600"></div>
<div class="abs" style="left:1848px;top:354px;width:4px;height:1px;background:#e6e600"></div>
<div class="abs" style="left:46px;top:375px;width:129px;height:1px;background:#e1e1e1"></div>
<div class="abs" style="left:174px;top:375px;width:102px;height:1px;background:#e1e1e1"></div>
<div class="abs" style="left:275px;top:375px;width:192px;height:1px;background:#e1e1e1"></div>
<div class="abs" style="left:466px;top:375px;width:265px;height:1px;background:#e1e1e1"></div>
<div class="abs" style="left:730px;top:375px;width:215px;height:1px;background:#e1e1e1"></div>
<div class="abs" style="left:944px;top:375px;width:102px;height:1px;background:#e1e1e1"></div>
<div class="abs" style="left:1045px;top:375px;width:102px;height:1px;background:#e1e1e1"></div>
<div class="abs" style="left:1146px;top:375px;width:242px;height:1px;background:#e1e1e1"></div>
<div class="abs" style="left:1387px;top:375px;width:260px;height:1px;background:#e1e1e1"></div>
<div class="abs" style="left:1646px;top:375px;width:102px;height:1px;background:#e1e1e1"></div>
<div class="abs" style="left:1747px;top:375px;width:102px;height:1px;background:#e1e1e1"></div>
<div class="abs" style="left:1848px;top:375px;width:4px;height:1px;background:#e1e1e1"></div>
<div class="abs" style="left:275px;top:396px;width:192px;height:1px;background:#e1e1e1"></div>
<div class="abs" style="left:46px;top:417px;width:129px;height:1px;background:#3b3478"></div>
<div class="abs" style="left:174px;top:417px;width:102px;height:1px;background:#3b3478"></div>
<div class="abs" style="left:275px;top:417px;width:192px;height:1px;background:#ff0000"></div>
<div class="abs" style="left:466px;top:417px;width:265px;height:1px;background:#3b3478"></div>
<div class="abs" style="left:730px;top:417px;width:215px;height:1px;background:#3b3478"></div>
<div class="abs" style="left:944px;top:417px;width:102px;height:1px;background:#3b3478"></div>
<div class="abs" style="left:1045px;top:417px;width:102px;height:1px;background:#3b3478"></div>
<div class="abs" style="left:1146px;top:417px;width:242px;height:1px;background:#3b3478"></div>
<div class="abs" style="left:1387px;top:417px;width:260px;height:1px;background:#3b3478"></div>
<div class="abs" style="left:1646px;top:417px;width:102px;height:1px;background:#3b3478"></div>
<div class="abs" style="left:1747px;top:417px;width:102px;height:1px;background:#3b3478"></div>
<div class="abs" style="left:1848px;top:417px;width:4px;height:1px;background:#3b3478"></div>
<div class="abs" style="left:46px;top:438px;width:129px;height:1px;background:#ff0000"></div>
<div class="abs" style="left:174px;top:438px;width:102px;height:1px;background:#ff0000"></div>
<div class="abs" style="left:275px;top:438px;width:192px;height:1px;background:#ff0000"></div>
<div class="abs" style="left:466px;top:438px;width:265px;height:1px;background:#ff0000"></div>
<div class="abs" style="left:730px;top:438px;width:215px;height:1px;background:#ff0000"></div>
<div class="abs" style="left:944px;top:438px;width:102px;height:1px;background:#ff0000"></div>
<div class="abs" style="left:1045px;top:438px;width:102px;height:1px;background:#ff0000"></div>
<div class="abs" style="left:1146px;top:438px;width:242px;height:1px;background:#ff0000"></div>
<div class="abs" style="left:1387px;top:438px;width:260px;height:1px;background:#ff0000"></div>
<div class="abs" style="left:1646px;top:438px;width:102px;height:1px;background:#ff0000"></div>
<div class="abs" style="left:1747px;top:438px;width:102px;height:1px;background:#ff0000"></div>
<div class="abs" style="left:1848px;top:438px;width:4px;height:1px;background:#ff0000"></div>
<div class="abs" style="left:46px;top:501px;width:129px;height:1px;background:#3b3478"></div>
<div class="abs" style="left:174px;top:501px;width:102px;height:1px;background:#3b3478"></div>
<div class="abs" style="left:275px;top:501px;width:192px;height:1px;background:#ff0000"></div>
<div class="abs" style="left:466px;top:501px;width:265px;height:1px;background:#3b3478"></div>
<div class="abs" style="left:730px;top:501px;width:215px;height:1px;background:#3b3478"></div>
<div class="abs" style="left:944px;top:501px;width:102px;height:1px;background:#ff0000"></div>
<div class="abs" style="left:1045px;top:501px;width:102px;height:1px;background:#3b3478"></div>
<div class="abs" style="left:1146px;top:501px;width:242px;height:1px;background:#3b3478"></div>
<div class="abs" style="left:1387px;top:501px;width:260px;height:1px;background:#3b3478"></div>
<div class="abs" style="left:1646px;top:501px;width:102px;height:1px;background:#3b3478"></div>
<div class="abs" style="left:1747px;top:501px;width:102px;height:1px;background:#3b3478"></div>
<div class="abs" style="left:1848px;top:501px;width:4px;height:1px;background:#3b3478"></div>
<div class="abs" style="left:46px;top:522px;width:129px;height:1px;background:#ff0000"></div>
<div class="abs" style="left:174px;top:522px;width:102px;height:1px;background:#ff0000"></div>
<div class="abs" style="left:275px;top:522px;width:192px;height:1px;background:#ff0000"></div>
<div class="abs" style="left:466px;top:522px;width:265px;height:1px;background:#ff0000"></div>
<div class="abs" style="left:730px;top:522px;width:215px;height:1px;background:#ff0000"></div>
<div class="abs" style="left:944px;top:522px;width:102px;height:1px;background:#ff0000"></div>
<div class="abs" style="left:1045px;top:522px;width:102px;height:1px;background:#ff0000"></div>
<div class="abs" style="left:1146px;top:522px;width:242px;height:1px;background:#ff0000"></div>
<div class="abs" style="left:1387px;top:522px;width:260px;height:1px;background:#ff0000"></div>
<div class="abs" style="left:1646px;top:522px;width:102px;height:1px;background:#ff0000"></div>
<div class="abs" style="left:1747px;top:522px;width:102px;height:1px;background:#ff0000"></div>
<div class="abs" style="left:1848px;top:522px;width:4px;height:1px;background:#ff0000"></div>
<div class="abs" style="left:46px;top:585px;width:129px;height:1px;background:#e1e1e1"></div>
<div class="abs" style="left:174px;top:585px;width:102px;height:1px;background:#e1e1e1"></div>
<div class="abs" style="left:275px;top:585px;width:192px;height:1px;background:#e1e1e1"></div>
<div class="abs" style="left:466px;top:585px;width:265px;height:1px;background:#e1e1e1"></div>
<div class="abs" style="left:730px;top:585px;width:215px;height:1px;background:#e1e1e1"></div>
<div class="abs" style="left:944px;top:585px;width:102px;height:1px;background:#e1e1e1"></div>
<div class="abs" style="left:1045px;top:585px;width:102px;height:1px;background:#e1e1e1"></div>
<div class="abs" style="left:1146px;top:585px;width:242px;height:1px;background:#e1e1e1"></div>
<div class="abs" style="left:1387px;top:585px;width:260px;height:1px;background:#e1e1e1"></div>
<div class="abs" style="left:1646px;top:585px;width:102px;height:1px;background:#e1e1e1"></div>
<div class="abs" style="left:1747px;top:585px;width:102px;height:1px;background:#e1e1e1"></div>
<div class="abs" style="left:1848px;top:585px;width:4px;height:1px;background:#e1e1e1"></div>
<div class="abs" style="left:46px;top:690px;width:129px;height:1px;background:#e1e1e1"></div>
<div class="abs" style="left:174px;top:690px;width:102px;height:1px;background:#e1e1e1"></div>
<div class="abs" style="left:275px;top:690px;width:192px;height:1px;background:#e1e1e1"></div>
<div class="abs" style="left:466px;top:690px;width:265px;height:1px;background:#e1e1e1"></div>
<div class="abs" style="left:730px;top:690px;width:215px;height:1px;background:#e1e1e1"></div>
<div class="abs" style="left:944px;top:690px;width:102px;height:1px;background:#e1e1e1"></div>
<div class="abs" style="left:1045px;top:690px;width:102px;height:1px;background:#e1e1e1"></div>
<div class="abs" style="left:1146px;top:690px;width:242px;height:1px;background:#e1e1e1"></div>
<div class="abs" style="left:1387px;top:690px;width:260px;height:1px;background:#e1e1e1"></div>
<div class="abs" style="left:1646px;top:690px;width:102px;height:1px;background:#e1e1e1"></div>
<div class="abs" style="left:1747px;top:690px;width:102px;height:1px;background:#e1e1e1"></div>
<div class="abs" style="left:1848px;top:690px;width:4px;height:1px;background:#e1e1e1"></div>
<div class="abs" style="left:46px;top:711px;width:129px;height:1px;background:#e1e1e1"></div>
<div class="abs" style="left:174px;top:711px;width:102px;height:1px;background:#e1e1e1"></div>
<div class="abs" style="left:275px;top:711px;width:192px;height:1px;background:#e1e1e1"></div>
<div class="abs" style="left:466px;top:711px;width:265px;height:1px;background:#e1e1e1"></div>
<div class="abs" style="left:730px;top:711px;width:215px;height:1px;background:#e1e1e1"></div>
<div class="abs" style="left:944px;top:711px;width:102px;height:1px;background:#e1e1e1"></div>
<div class="abs" style="left:1045px;top:711px;width:102px;height:1px;background:#e1e1e1"></div>
<div class="abs" style="left:1146px;top:711px;width:242px;height:1px;background:#e1e1e1"></div>
<div class="abs" style="left:1387px;top:711px;width:260px;height:1px;background:#e1e1e1"></div>
<div class="abs" style="left:1646px;top:711px;width:102px;height:1px;background:#e1e1e1"></div>
<div class="abs" style="left:1747px;top:711px;width:102px;height:1px;background:#e1e1e1"></div>
<div class="abs" style="left:1848px;top:711px;width:4px;height:1px;background:#e1e1e1"></div>
<div class="abs" style="left:46px;top:732px;width:129px;height:1px;background:#e1e1e1"></div>
<div class="abs" style="left:174px;top:732px;width:102px;height:1px;background:#e1e1e1"></div>
<div class="abs" style="left:275px;top:732px;width:192px;height:1px;background:#e1e1e1"></div>
<div class="abs" style="left:466px;top:732px;width:265px;height:1px;background:#e1e1e1"></div>
<div class="abs" style="left:730px;top:732px;width:215px;height:1px;background:#e1e1e1"></div>
<div class="abs" style="left:944px;top:732px;width:102px;height:1px;background:#e1e1e1"></div>
<div class="abs" style="left:1045px;top:732px;width:102px;height:1px;background:#e1e1e1"></div>
<div class="abs" style="left:1146px;top:732px;width:242px;height:1px;background:#e1e1e1"></div>
<div class="abs" style="left:1387px;top:732px;width:260px;height:1px;background:#e1e1e1"></div>
<div class="abs" style="left:1646px;top:732px;width:102px;height:1px;background:#e1e1e1"></div>
<div class="abs" style="left:1747px;top:732px;width:102px;height:1px;background:#e1e1e1"></div>
<div class="abs" style="left:1848px;top:732px;width:4px;height:1px;background:#e1e1e1"></div>
<div class="abs" style="left:46px;top:753px;width:129px;height:1px;background:#e1e1e1"></div>
<div class="abs" style="left:174px;top:753px;width:102px;height:1px;background:#e1e1e1"></div>
<div class="abs" style="left:275px;top:753px;width:192px;height:1px;background:#e1e1e1"></div>
<div class="abs" style="left:466px;top:753px;width:265px;height:1px;background:#e1e1e1"></div>
<div class="abs" style="left:730px;top:753px;width:215px;height:1px;background:#e1e1e1"></div>
<div class="abs" style="left:944px;top:753px;width:102px;height:1px;background:#e1e1e1"></div>
<div class="abs" style="left:1045px;top:753px;width:102px;height:1px;background:#e1e1e1"></div>
<div class="abs" style="left:1146px;top:753px;width:242px;height:1px;background:#e1e1e1"></div>
<div class="abs" style="left:1387px;top:753px;width:260px;height:1px;background:#e1e1e1"></div>
<div class="abs" style="left:1646px;top:753px;width:102px;height:1px;background:#e1e1e1"></div>
<div class="abs" style="left:1747px;top:753px;width:102px;height:1px;background:#e1e1e1"></div>
<div class="abs" style="left:1848px;top:753px;width:4px;height:1px;background:#e1e1e1"></div>
<div class="abs" style="left:46px;top:774px;width:129px;height:1px;background:#e1e1e1"></div>
<div class="abs" style="left:174px;top:774px;width:102px;height:1px;background:#e1e1e1"></div>
<div class="abs" style="left:275px;top:774px;width:192px;height:1px;background:#e1e1e1"></div>
<div class="abs" style="left:466px;top:774px;width:265px;height:1px;background:#e1e1e1"></div>
<div class="abs" style="left:730px;top:774px;width:215px;height:1px;background:#e1e1e1"></div>
<div class="abs" style="left:944px;top:774px;width:102px;height:1px;background:#e1e1e1"></div>
<div class="abs" style="left:1045px;top:774px;width:102px;height:1px;background:#e1e1e1"></div>
<div class="abs" style="left:1146px;top:774px;width:242px;height:1px;background:#e1e1e1"></div>
<div class="abs" style="left:1387px;top:774px;width:260px;height:1px;background:#e1e1e1"></div>
<div class="abs" style="left:1646px;top:774px;width:102px;height:1px;background:#e1e1e1"></div>
<div class="abs" style="left:1747px;top:774px;width:102px;height:1px;background:#e1e1e1"></div>
<div class="abs" style="left:1848px;top:774px;width:4px;height:1px;background:#e1e1e1"></div>
<div class="abs" style="left:46px;top:795px;width:129px;height:1px;background:#e1e1e1"></div>
<div class="abs" style="left:174px;top:795px;width:102px;height:1px;background:#e1e1e1"></div>
<div class="abs" style="left:275px;top:795px;width:192px;height:1px;background:#e1e1e1"></div>
<div class="abs" style="left:466px;top:795px;width:265px;height:1px;background:#e1e1e1"></div>
<div class="abs" style="left:730px;top:795px;width:215px;height:1px;background:#e1e1e1"></div>
<div class="abs" style="left:944px;top:795px;width:102px;height:1px;background:#e1e1e1"></div>
<div class="abs" style="left:1045px;top:795px;width:102px;height:1px;background:#e1e1e1"></div>
<div class="abs" style="left:1146px;top:795px;width:242px;height:1px;background:#e1e1e1"></div>
<div class="abs" style="left:1387px;top:795px;width:260px;height:1px;background:#e1e1e1"></div>
<div class="abs" style="left:1646px;top:795px;width:102px;height:1px;background:#e1e1e1"></div>
<div class="abs" style="left:1747px;top:795px;width:102px;height:1px;background:#e1e1e1"></div>
<div class="abs" style="left:1848px;top:795px;width:4px;height:1px;background:#e1e1e1"></div>
<div class="abs" style="left:46px;top:816px;width:129px;height:1px;background:#e1e1e1"></div>
<div class="abs" style="left:174px;top:816px;width:102px;height:1px;background:#e1e1e1"></div>
<div class="abs" style="left:275px;top:816px;width:192px;height:1px;background:#e1e1e1"></div>
<div class="abs" style="left:466px;top:816px;width:265px;height:1px;background:#e1e1e1"></div>
<div class="abs" style="left:730px;top:816px;width:215px;height:1px;background:#e1e1e1"></div>
<div class="abs" style="left:944px;top:816px;width:102px;height:1px;background:#e1e1e1"></div>
<div class="abs" style="left:1045px;top:816px;width:102px;height:1px;background:#e1e1e1"></div>
<div class="abs" style="left:1146px;top:816px;width:242px;height:1px;background:#e1e1e1"></div>
<div class="abs" style="left:1387px;top:816px;width:260px;height:1px;background:#e1e1e1"></div>
<div class="abs" style="left:1646px;top:816px;width:102px;height:1px;background:#e1e1e1"></div>
<div class="abs" style="left:1747px;top:816px;width:102px;height:1px;background:#e1e1e1"></div>
<div class="abs" style="left:1848px;top:816px;width:4px;height:1px;background:#e1e1e1"></div>
<div class="abs" style="left:46px;top:837px;width:129px;height:1px;background:#e1e1e1"></div>
<div class="abs" style="left:174px;top:837px;width:102px;height:1px;background:#e1e1e1"></div>
<div class="abs" style="left:275px;top:837px;width:192px;height:1px;background:#e1e1e1"></div>
<div class="abs" style="left:1045px;top:837px;width:102px;height:1px;background:#e1e1e1"></div>
<div class="abs" style="left:1146px;top:837px;width:242px;height:1px;background:#e1e1e1"></div>
<div class="abs" style="left:1387px;top:837px;width:260px;height:1px;background:#e1e1e1"></div>
<div class="abs" style="left:1646px;top:837px;width:102px;height:1px;background:#e1e1e1"></div>
<div class="abs" style="left:1747px;top:837px;width:102px;height:1px;background:#e1e1e1"></div>
<div class="abs" style="left:1848px;top:837px;width:4px;height:1px;background:#e1e1e1"></div>
<div class="abs" style="left:46px;top:858px;width:129px;height:1px;background:#e1e1e1"></div>
<div class="abs" style="left:174px;top:858px;width:102px;height:1px;background:#e1e1e1"></div>
<div class="abs" style="left:275px;top:858px;width:192px;height:1px;background:#e1e1e1"></div>
<div class="abs" style="left:466px;top:858px;width:265px;height:1px;background:#e1e1e1"></div>
<div class="abs" style="left:730px;top:858px;width:215px;height:1px;background:#e1e1e1"></div>
<div class="abs" style="left:944px;top:858px;width:102px;height:1px;background:#e1e1e1"></div>
<div class="abs" style="left:1045px;top:858px;width:102px;height:1px;background:#e1e1e1"></div>
<div class="abs" style="left:1146px;top:858px;width:242px;height:1px;background:#e1e1e1"></div>
<div class="abs" style="left:1387px;top:858px;width:260px;height:1px;background:#e1e1e1"></div>
<div class="abs" style="left:1646px;top:858px;width:102px;height:1px;background:#e1e1e1"></div>
<div class="abs" style="left:1747px;top:858px;width:102px;height:1px;background:#e1e1e1"></div>
<div class="abs" style="left:1848px;top:858px;width:4px;height:1px;background:#e1e1e1"></div>
<div class="vl" style="left:174px;top:229px;height:20px;background:#e00000"></div>
<div class="vl" style="left:275px;top:229px;height:20px;background:#e00000"></div>
<div class="vl" style="left:466px;top:229px;height:20px;background:#e00000"></div>
<div class="vl" style="left:730px;top:229px;height:20px;background:#e00000"></div>
<div class="vl" style="left:944px;top:229px;height:20px;background:#e00000"></div>
<div class="vl" style="left:1045px;top:229px;height:20px;background:#e00000"></div>
<div class="vl" style="left:1146px;top:229px;height:20px;background:#e00000"></div>
<div class="vl" style="left:1387px;top:229px;height:20px;background:#e00000"></div>
<div class="vl" style="left:1646px;top:229px;height:20px;background:#e00000"></div>
<div class="vl" style="left:1747px;top:229px;height:20px;background:#e00000"></div>
<div class="vl" style="left:1848px;top:229px;height:20px;background:#e00000"></div>
<div class="vl" style="left:174px;top:250px;height:20px;background:#e1e1e1"></div>
<div class="vl" style="left:275px;top:250px;height:20px;background:#e1e1e1"></div>
<div class="vl" style="left:466px;top:250px;height:20px;background:#e1e1e1"></div>
<div class="vl" style="left:730px;top:250px;height:20px;background:#e1e1e1"></div>
<div class="vl" style="left:944px;top:250px;height:20px;background:#e1e1e1"></div>
<div class="vl" style="left:1045px;top:250px;height:20px;background:#e1e1e1"></div>
<div class="vl" style="left:1146px;top:250px;height:20px;background:#e1e1e1"></div>
<div class="vl" style="left:1387px;top:250px;height:20px;background:#e1e1e1"></div>
<div class="vl" style="left:1646px;top:250px;height:20px;background:#e1e1e1"></div>
<div class="vl" style="left:1747px;top:250px;height:20px;background:#e1e1e1"></div>
<div class="vl" style="left:1848px;top:250px;height:20px;background:#e1e1e1"></div>
<div class="vl" style="left:174px;top:271px;height:20px;background:#e6e600"></div>
<div class="vl" style="left:275px;top:271px;height:20px;background:#e6e600"></div>
<div class="vl" style="left:466px;top:271px;height:20px;background:#e6e600"></div>
<div class="vl" style="left:730px;top:271px;height:20px;background:#e6e600"></div>
<div class="vl" style="left:944px;top:271px;height:20px;background:#e6e600"></div>
<div class="vl" style="left:1045px;top:271px;height:20px;background:#e6e600"></div>
<div class="vl" style="left:1146px;top:271px;height:20px;background:#e6e600"></div>
<div class="vl" style="left:1387px;top:271px;height:20px;background:#e6e600"></div>
<div class="vl" style="left:1646px;top:271px;height:20px;background:#e6e600"></div>
<div class="vl" style="left:1747px;top:271px;height:20px;background:#e6e600"></div>
<div class="vl" style="left:1848px;top:271px;height:20px;background:#e6e600"></div>
<div class="vl" style="left:174px;top:292px;height:20px;background:#e1e1e1"></div>
<div class="vl" style="left:275px;top:292px;height:20px;background:#e1e1e1"></div>
<div class="vl" style="left:466px;top:292px;height:20px;background:#e1e1e1"></div>
<div class="vl" style="left:730px;top:292px;height:20px;background:#e1e1e1"></div>
<div class="vl" style="left:944px;top:292px;height:20px;background:#e1e1e1"></div>
<div class="vl" style="left:1045px;top:292px;height:20px;background:#e1e1e1"></div>
<div class="vl" style="left:1146px;top:292px;height:20px;background:#e1e1e1"></div>
<div class="vl" style="left:1387px;top:292px;height:20px;background:#e1e1e1"></div>
<div class="vl" style="left:1646px;top:292px;height:20px;background:#e1e1e1"></div>
<div class="vl" style="left:1747px;top:292px;height:20px;background:#e1e1e1"></div>
<div class="vl" style="left:1848px;top:292px;height:20px;background:#e1e1e1"></div>
<div class="vl" style="left:174px;top:313px;height:20px;background:#e6e600"></div>
<div class="vl" style="left:275px;top:313px;height:20px;background:#e6e600"></div>
<div class="vl" style="left:466px;top:313px;height:20px;background:#e6e600"></div>
<div class="vl" style="left:730px;top:313px;height:20px;background:#e6e600"></div>
<div class="vl" style="left:944px;top:313px;height:20px;background:#e6e600"></div>
<div class="vl" style="left:1045px;top:313px;height:20px;background:#e6e600"></div>
<div class="vl" style="left:1146px;top:313px;height:20px;background:#e6e600"></div>
<div class="vl" style="left:1387px;top:313px;height:20px;background:#e6e600"></div>
<div class="vl" style="left:1646px;top:313px;height:20px;background:#e6e600"></div>
<div class="vl" style="left:1747px;top:313px;height:20px;background:#e6e600"></div>
<div class="vl" style="left:1848px;top:313px;height:20px;background:#e6e600"></div>
<div class="vl" style="left:174px;top:334px;height:20px;background:#e1e1e1"></div>
<div class="vl" style="left:275px;top:334px;height:20px;background:#e1e1e1"></div>
<div class="vl" style="left:466px;top:334px;height:20px;background:#e1e1e1"></div>
<div class="vl" style="left:730px;top:334px;height:20px;background:#e1e1e1"></div>
<div class="vl" style="left:944px;top:334px;height:20px;background:#e1e1e1"></div>
<div class="vl" style="left:1045px;top:334px;height:20px;background:#e1e1e1"></div>
<div class="vl" style="left:1146px;top:334px;height:20px;background:#e1e1e1"></div>
<div class="vl" style="left:1387px;top:334px;height:20px;background:#e1e1e1"></div>
<div class="vl" style="left:1646px;top:334px;height:20px;background:#e1e1e1"></div>
<div class="vl" style="left:1747px;top:334px;height:20px;background:#e1e1e1"></div>
<div class="vl" style="left:1848px;top:334px;height:20px;background:#e1e1e1"></div>
<div class="vl" style="left:174px;top:355px;height:20px;background:#e6e600"></div>
<div class="vl" style="left:275px;top:355px;height:20px;background:#e6e600"></div>
<div class="vl" style="left:466px;top:355px;height:20px;background:#e6e600"></div>
<div class="vl" style="left:730px;top:355px;height:20px;background:#e6e600"></div>
<div class="vl" style="left:944px;top:355px;height:20px;background:#e6e600"></div>
<div class="vl" style="left:1045px;top:355px;height:20px;background:#e6e600"></div>
<div class="vl" style="left:1146px;top:355px;height:20px;background:#e6e600"></div>
<div class="vl" style="left:1387px;top:355px;height:20px;background:#e6e600"></div>
<div class="vl" style="left:1646px;top:355px;height:20px;background:#e6e600"></div>
<div class="vl" style="left:1747px;top:355px;height:20px;background:#e6e600"></div>
<div class="vl" style="left:1848px;top:355px;height:20px;background:#e6e600"></div>
<div class="vl" style="left:174px;top:376px;height:20px;background:#e1e1e1"></div>
<div class="vl" style="left:275px;top:376px;height:20px;background:#e1e1e1"></div>
<div class="vl" style="left:466px;top:376px;height:20px;background:#e1e1e1"></div>
<div class="vl" style="left:730px;top:376px;height:20px;background:#e1e1e1"></div>
<div class="vl" style="left:944px;top:376px;height:20px;background:#e1e1e1"></div>
<div class="vl" style="left:1045px;top:376px;height:20px;background:#e1e1e1"></div>
<div class="vl" style="left:1146px;top:376px;height:20px;background:#e1e1e1"></div>
<div class="vl" style="left:1387px;top:376px;height:20px;background:#e1e1e1"></div>
<div class="vl" style="left:1646px;top:376px;height:20px;background:#e1e1e1"></div>
<div class="vl" style="left:1747px;top:376px;height:20px;background:#e1e1e1"></div>
<div class="vl" style="left:1848px;top:376px;height:20px;background:#e1e1e1"></div>
<div class="vl" style="left:174px;top:418px;height:20px;background:#e00000"></div>
<div class="vl" style="left:275px;top:418px;height:20px;background:#e00000"></div>
<div class="vl" style="left:466px;top:418px;height:20px;background:#e00000"></div>
<div class="vl" style="left:730px;top:418px;height:20px;background:#e00000"></div>
<div class="vl" style="left:944px;top:418px;height:20px;background:#e00000"></div>
<div class="vl" style="left:1045px;top:418px;height:20px;background:#e00000"></div>
<div class="vl" style="left:1146px;top:418px;height:20px;background:#e00000"></div>
<div class="vl" style="left:1387px;top:418px;height:20px;background:#e00000"></div>
<div class="vl" style="left:1646px;top:418px;height:20px;background:#e00000"></div>
<div class="vl" style="left:1747px;top:418px;height:20px;background:#e00000"></div>
<div class="vl" style="left:1848px;top:418px;height:20px;background:#e00000"></div>
<div class="vl" style="left:174px;top:439px;height:20px;background:#e1e1e1"></div>
<div class="vl" style="left:275px;top:439px;height:20px;background:#e1e1e1"></div>
<div class="vl" style="left:466px;top:439px;height:20px;background:#e1e1e1"></div>
<div class="vl" style="left:730px;top:439px;height:20px;background:#e1e1e1"></div>
<div class="vl" style="left:944px;top:439px;height:20px;background:#e1e1e1"></div>
<div class="vl" style="left:1045px;top:439px;height:20px;background:#e1e1e1"></div>
<div class="vl" style="left:1146px;top:439px;height:20px;background:#e1e1e1"></div>
<div class="vl" style="left:1387px;top:439px;height:20px;background:#e1e1e1"></div>
<div class="vl" style="left:1646px;top:439px;height:20px;background:#e1e1e1"></div>
<div class="vl" style="left:1747px;top:439px;height:20px;background:#e1e1e1"></div>
<div class="vl" style="left:1848px;top:439px;height:20px;background:#e1e1e1"></div>
<div class="vl" style="left:174px;top:481px;height:20px;background:#e1e1e1"></div>
<div class="vl" style="left:275px;top:481px;height:20px;background:#e1e1e1"></div>
<div class="vl" style="left:466px;top:481px;height:20px;background:#e1e1e1"></div>
<div class="vl" style="left:730px;top:481px;height:20px;background:#e1e1e1"></div>
<div class="vl" style="left:944px;top:481px;height:20px;background:#e1e1e1"></div>
<div class="vl" style="left:1045px;top:481px;height:20px;background:#e1e1e1"></div>
<div class="vl" style="left:1146px;top:481px;height:20px;background:#e1e1e1"></div>
<div class="vl" style="left:1387px;top:481px;height:20px;background:#e1e1e1"></div>
<div class="vl" style="left:1646px;top:481px;height:20px;background:#e1e1e1"></div>
<div class="vl" style="left:1747px;top:481px;height:20px;background:#e1e1e1"></div>
<div class="vl" style="left:1848px;top:481px;height:20px;background:#e1e1e1"></div>
<div class="vl" style="left:174px;top:502px;height:20px;background:#e00000"></div>
<div class="vl" style="left:275px;top:502px;height:20px;background:#e00000"></div>
<div class="vl" style="left:466px;top:502px;height:20px;background:#e00000"></div>
<div class="vl" style="left:730px;top:502px;height:20px;background:#e00000"></div>
<div class="vl" style="left:944px;top:502px;height:20px;background:#e00000"></div>
<div class="vl" style="left:1045px;top:502px;height:20px;background:#e00000"></div>
<div class="vl" style="left:1146px;top:502px;height:20px;background:#e00000"></div>
<div class="vl" style="left:1387px;top:502px;height:20px;background:#e00000"></div>
<div class="vl" style="left:1646px;top:502px;height:20px;background:#e00000"></div>
<div class="vl" style="left:1747px;top:502px;height:20px;background:#e00000"></div>
<div class="vl" style="left:1848px;top:502px;height:20px;background:#e00000"></div>
<div class="vl" style="left:174px;top:523px;height:20px;background:#e1e1e1"></div>
<div class="vl" style="left:275px;top:523px;height:20px;background:#e1e1e1"></div>
<div class="vl" style="left:466px;top:523px;height:20px;background:#e1e1e1"></div>
<div class="vl" style="left:730px;top:523px;height:20px;background:#e1e1e1"></div>
<div class="vl" style="left:944px;top:523px;height:20px;background:#e1e1e1"></div>
<div class="vl" style="left:1045px;top:523px;height:20px;background:#e1e1e1"></div>
<div class="vl" style="left:1146px;top:523px;height:20px;background:#e1e1e1"></div>
<div class="vl" style="left:1387px;top:523px;height:20px;background:#e1e1e1"></div>
<div class="vl" style="left:1646px;top:523px;height:20px;background:#e1e1e1"></div>
<div class="vl" style="left:1747px;top:523px;height:20px;background:#e1e1e1"></div>
<div class="vl" style="left:1848px;top:523px;height:20px;background:#e1e1e1"></div>
<div class="vl" style="left:174px;top:565px;height:20px;background:#e1e1e1"></div>
<div class="vl" style="left:275px;top:565px;height:20px;background:#e1e1e1"></div>
<div class="vl" style="left:466px;top:565px;height:20px;background:#e1e1e1"></div>
<div class="vl" style="left:730px;top:565px;height:20px;background:#e1e1e1"></div>
<div class="vl" style="left:944px;top:565px;height:20px;background:#e1e1e1"></div>
<div class="vl" style="left:1045px;top:565px;height:20px;background:#e1e1e1"></div>
<div class="vl" style="left:1146px;top:565px;height:20px;background:#e1e1e1"></div>
<div class="vl" style="left:1387px;top:565px;height:20px;background:#e1e1e1"></div>
<div class="vl" style="left:1646px;top:565px;height:20px;background:#e1e1e1"></div>
<div class="vl" style="left:1747px;top:565px;height:20px;background:#e1e1e1"></div>
<div class="vl" style="left:1848px;top:565px;height:20px;background:#e1e1e1"></div>
<div class="vl" style="left:174px;top:586px;height:20px;background:#e1e1e1"></div>
<div class="vl" style="left:275px;top:586px;height:20px;background:#e1e1e1"></div>
<div class="vl" style="left:466px;top:586px;height:20px;background:#e1e1e1"></div>
<div class="vl" style="left:730px;top:586px;height:20px;background:#e1e1e1"></div>
<div class="vl" style="left:944px;top:586px;height:20px;background:#e1e1e1"></div>
<div class="vl" style="left:1045px;top:586px;height:20px;background:#e1e1e1"></div>
<div class="vl" style="left:1146px;top:586px;height:20px;background:#e1e1e1"></div>
<div class="vl" style="left:1387px;top:586px;height:20px;background:#e1e1e1"></div>
<div class="vl" style="left:1646px;top:586px;height:20px;background:#e1e1e1"></div>
<div class="vl" style="left:1747px;top:586px;height:20px;background:#e1e1e1"></div>
<div class="vl" style="left:1848px;top:586px;height:20px;background:#e1e1e1"></div>
<div class="vl" style="left:174px;top:628px;height:20px;background:#e1e1e1"></div>
<div class="vl" style="left:275px;top:628px;height:20px;background:#e1e1e1"></div>
<div class="vl" style="left:466px;top:628px;height:20px;background:#e1e1e1"></div>
<div class="vl" style="left:730px;top:628px;height:20px;background:#e1e1e1"></div>
<div class="vl" style="left:944px;top:628px;height:20px;background:#e1e1e1"></div>
<div class="vl" style="left:1045px;top:628px;height:20px;background:#e1e1e1"></div>
<div class="vl" style="left:1146px;top:628px;height:20px;background:#e1e1e1"></div>
<div class="vl" style="left:1387px;top:628px;height:20px;background:#e1e1e1"></div>
<div class="vl" style="left:1646px;top:628px;height:20px;background:#e1e1e1"></div>
<div class="vl" style="left:1747px;top:628px;height:20px;background:#e1e1e1"></div>
<div class="vl" style="left:1848px;top:628px;height:20px;background:#e1e1e1"></div>
<div class="vl" style="left:174px;top:670px;height:20px;background:#e1e1e1"></div>
<div class="vl" style="left:275px;top:670px;height:20px;background:#e1e1e1"></div>
<div class="vl" style="left:466px;top:670px;height:20px;background:#e1e1e1"></div>
<div class="vl" style="left:730px;top:670px;height:20px;background:#e1e1e1"></div>
<div class="vl" style="left:944px;top:670px;height:20px;background:#e1e1e1"></div>
<div class="vl" style="left:1045px;top:670px;height:20px;background:#e1e1e1"></div>
<div class="vl" style="left:1146px;top:670px;height:20px;background:#e1e1e1"></div>
<div class="vl" style="left:1387px;top:670px;height:20px;background:#e1e1e1"></div>
<div class="vl" style="left:1646px;top:670px;height:20px;background:#e1e1e1"></div>
<div class="vl" style="left:1747px;top:670px;height:20px;background:#e1e1e1"></div>
<div class="vl" style="left:1848px;top:670px;height:20px;background:#e1e1e1"></div>
<div class="vl" style="left:174px;top:691px;height:20px;background:#e1e1e1"></div>
<div class="vl" style="left:275px;top:691px;height:20px;background:#e1e1e1"></div>
<div class="vl" style="left:466px;top:691px;height:20px;background:#e1e1e1"></div>
<div class="vl" style="left:730px;top:691px;height:20px;background:#e1e1e1"></div>
<div class="vl" style="left:944px;top:691px;height:20px;background:#e1e1e1"></div>
<div class="vl" style="left:1045px;top:691px;height:20px;background:#e1e1e1"></div>
<div class="vl" style="left:1146px;top:691px;height:20px;background:#e1e1e1"></div>
<div class="vl" style="left:1387px;top:691px;height:20px;background:#e1e1e1"></div>
<div class="vl" style="left:1646px;top:691px;height:20px;background:#e1e1e1"></div>
<div class="vl" style="left:1747px;top:691px;height:20px;background:#e1e1e1"></div>
<div class="vl" style="left:1848px;top:691px;height:20px;background:#e1e1e1"></div>
<div class="vl" style="left:174px;top:712px;height:20px;background:#e1e1e1"></div>
<div class="vl" style="left:275px;top:712px;height:20px;background:#e1e1e1"></div>
<div class="vl" style="left:466px;top:712px;height:20px;background:#e1e1e1"></div>
<div class="vl" style="left:730px;top:712px;height:20px;background:#e1e1e1"></div>
<div class="vl" style="left:944px;top:712px;height:20px;background:#e1e1e1"></div>
<div class="vl" style="left:1045px;top:712px;height:20px;background:#e1e1e1"></div>
<div class="vl" style="left:1146px;top:712px;height:20px;background:#e1e1e1"></div>
<div class="vl" style="left:1387px;top:712px;height:20px;background:#e1e1e1"></div>
<div class="vl" style="left:1646px;top:712px;height:20px;background:#e1e1e1"></div>
<div class="vl" style="left:1747px;top:712px;height:20px;background:#e1e1e1"></div>
<div class="vl" style="left:1848px;top:712px;height:20px;background:#e1e1e1"></div>
<div class="vl" style="left:174px;top:733px;height:20px;background:#e1e1e1"></div>
<div class="vl" style="left:275px;top:733px;height:20px;background:#e1e1e1"></div>
<div class="vl" style="left:466px;top:733px;height:20px;background:#e1e1e1"></div>
<div class="vl" style="left:730px;top:733px;height:20px;background:#e1e1e1"></div>
<div class="vl" style="left:944px;top:733px;height:20px;background:#e1e1e1"></div>
<div class="vl" style="left:1045px;top:733px;height:20px;background:#e1e1e1"></div>
<div class="vl" style="left:1146px;top:733px;height:20px;background:#e1e1e1"></div>
<div class="vl" style="left:1387px;top:733px;height:20px;background:#e1e1e1"></div>
<div class="vl" style="left:1646px;top:733px;height:20px;background:#e1e1e1"></div>
<div class="vl" style="left:1747px;top:733px;height:20px;background:#e1e1e1"></div>
<div class="vl" style="left:1848px;top:733px;height:20px;background:#e1e1e1"></div>
<div class="vl" style="left:174px;top:754px;height:20px;background:#e1e1e1"></div>
<div class="vl" style="left:275px;top:754px;height:20px;background:#e1e1e1"></div>
<div class="vl" style="left:466px;top:754px;height:20px;background:#e1e1e1"></div>
<div class="vl" style="left:730px;top:754px;height:20px;background:#e1e1e1"></div>
<div class="vl" style="left:944px;top:754px;height:20px;background:#e1e1e1"></div>
<div class="vl" style="left:1045px;top:754px;height:20px;background:#e1e1e1"></div>
<div class="vl" style="left:1146px;top:754px;height:20px;background:#e1e1e1"></div>
<div class="vl" style="left:1387px;top:754px;height:20px;background:#e1e1e1"></div>
<div class="vl" style="left:1646px;top:754px;height:20px;background:#e1e1e1"></div>
<div class="vl" style="left:1747px;top:754px;height:20px;background:#e1e1e1"></div>
<div class="vl" style="left:1848px;top:754px;height:20px;background:#e1e1e1"></div>
<div class="vl" style="left:174px;top:775px;height:20px;background:#e1e1e1"></div>
<div class="vl" style="left:275px;top:775px;height:20px;background:#e1e1e1"></div>
<div class="vl" style="left:466px;top:775px;height:20px;background:#e1e1e1"></div>
<div class="vl" style="left:730px;top:775px;height:20px;background:#e1e1e1"></div>
<div class="vl" style="left:944px;top:775px;height:20px;background:#e1e1e1"></div>
<div class="vl" style="left:1045px;top:775px;height:20px;background:#e1e1e1"></div>
<div class="vl" style="left:1146px;top:775px;height:20px;background:#e1e1e1"></div>
<div class="vl" style="left:1387px;top:775px;height:20px;background:#e1e1e1"></div>
<div class="vl" style="left:1646px;top:775px;height:20px;background:#e1e1e1"></div>
<div class="vl" style="left:1747px;top:775px;height:20px;background:#e1e1e1"></div>
<div class="vl" style="left:1848px;top:775px;height:20px;background:#e1e1e1"></div>
<div class="vl" style="left:174px;top:796px;height:20px;background:#e1e1e1"></div>
<div class="vl" style="left:275px;top:796px;height:20px;background:#e1e1e1"></div>
<div class="vl" style="left:466px;top:796px;height:20px;background:#e1e1e1"></div>
<div class="vl" style="left:730px;top:796px;height:20px;background:#e1e1e1"></div>
<div class="vl" style="left:944px;top:796px;height:20px;background:#e1e1e1"></div>
<div class="vl" style="left:1045px;top:796px;height:20px;background:#e1e1e1"></div>
<div class="vl" style="left:1146px;top:796px;height:20px;background:#e1e1e1"></div>
<div class="vl" style="left:1387px;top:796px;height:20px;background:#e1e1e1"></div>
<div class="vl" style="left:1646px;top:796px;height:20px;background:#e1e1e1"></div>
<div class="vl" style="left:1747px;top:796px;height:20px;background:#e1e1e1"></div>
<div class="vl" style="left:1848px;top:796px;height:20px;background:#e1e1e1"></div>
<div class="vl" style="left:174px;top:817px;height:20px;background:#e1e1e1"></div>
<div class="vl" style="left:275px;top:817px;height:20px;background:#e1e1e1"></div>
<div class="vl" style="left:466px;top:817px;height:20px;background:#e1e1e1"></div>
<div class="vl" style="left:730px;top:817px;height:20px;background:#e1e1e1"></div>
<div class="vl" style="left:944px;top:817px;height:20px;background:#e1e1e1"></div>
<div class="vl" style="left:1045px;top:817px;height:20px;background:#e1e1e1"></div>
<div class="vl" style="left:1146px;top:817px;height:20px;background:#e1e1e1"></div>
<div class="vl" style="left:1387px;top:817px;height:20px;background:#e1e1e1"></div>
<div class="vl" style="left:1646px;top:817px;height:20px;background:#e1e1e1"></div>
<div class="vl" style="left:1747px;top:817px;height:20px;background:#e1e1e1"></div>
<div class="vl" style="left:1848px;top:817px;height:20px;background:#e1e1e1"></div>
<div class="vl" style="left:174px;top:838px;height:20px;background:#e1e1e1"></div>
<div class="vl" style="left:275px;top:838px;height:20px;background:#e1e1e1"></div>
<div class="vl" style="left:1045px;top:838px;height:20px;background:#e1e1e1"></div>
<div class="vl" style="left:1146px;top:838px;height:20px;background:#e1e1e1"></div>
<div class="vl" style="left:1387px;top:838px;height:20px;background:#e1e1e1"></div>
<div class="vl" style="left:1646px;top:838px;height:20px;background:#e1e1e1"></div>
<div class="vl" style="left:1747px;top:838px;height:20px;background:#e1e1e1"></div>
<div class="vl" style="left:1848px;top:838px;height:20px;background:#e1e1e1"></div>
<div class="abs" style="left:46px;top:480px;width:230px;height:1px;background:#000"></div>
<div class="abs" style="left:466px;top:480px;width:479px;height:1px;background:#000"></div>
<div class="abs" style="left:1045px;top:480px;width:807px;height:1px;background:#000"></div>
<div class="abs" style="left:944px;top:480px;width:102px;height:1px;background:#3b3478"></div>
<div class="abs" style="left:46px;top:501px;width:230px;height:1px;background:#000"></div>
<div class="abs" style="left:466px;top:501px;width:479px;height:1px;background:#000"></div>
<div class="abs" style="left:1045px;top:501px;width:807px;height:1px;background:#000"></div>
<div class="abs" style="left:46px;top:522px;width:230px;height:1px;background:#000"></div>
<div class="abs" style="left:466px;top:522px;width:479px;height:1px;background:#000"></div>
<div class="abs" style="left:1045px;top:522px;width:807px;height:1px;background:#000"></div>
<div class="abs" style="left:46px;top:543px;width:230px;height:1px;background:#000"></div>
<div class="abs" style="left:466px;top:543px;width:479px;height:1px;background:#000"></div>
<div class="abs" style="left:1045px;top:543px;width:807px;height:1px;background:#000"></div>
<div class="abs" style="left:944px;top:543px;width:102px;height:1px;background:#000"></div>
<div class="abs" style="left:46px;top:564px;width:230px;height:1px;background:#000"></div>
<div class="abs" style="left:466px;top:564px;width:479px;height:1px;background:#000"></div>
<div class="abs" style="left:1045px;top:564px;width:807px;height:1px;background:#000"></div>
<div class="abs" style="left:944px;top:564px;width:102px;height:1px;background:#000"></div>
<div class="abs" style="left:46px;top:585px;width:230px;height:1px;background:#000"></div>
<div class="abs" style="left:466px;top:585px;width:479px;height:1px;background:#000"></div>
<div class="abs" style="left:1045px;top:585px;width:807px;height:1px;background:#000"></div>
<div class="abs" style="left:46px;top:606px;width:230px;height:1px;background:#000"></div>
<div class="abs" style="left:466px;top:606px;width:479px;height:1px;background:#000"></div>
<div class="abs" style="left:1045px;top:606px;width:807px;height:1px;background:#000"></div>
<div class="abs" style="left:944px;top:606px;width:102px;height:1px;background:#000"></div>
<div class="abs" style="left:46px;top:627px;width:230px;height:1px;background:#000"></div>
<div class="abs" style="left:466px;top:627px;width:479px;height:1px;background:#000"></div>
<div class="abs" style="left:1045px;top:627px;width:807px;height:1px;background:#000"></div>
<div class="abs" style="left:46px;top:648px;width:230px;height:1px;background:#000"></div>
<div class="abs" style="left:466px;top:648px;width:479px;height:1px;background:#000"></div>
<div class="abs" style="left:1045px;top:648px;width:807px;height:1px;background:#000"></div>
<div class="abs" style="left:46px;top:669px;width:230px;height:1px;background:#000"></div>
<div class="abs" style="left:466px;top:669px;width:479px;height:1px;background:#000"></div>
<div class="abs" style="left:1045px;top:669px;width:807px;height:1px;background:#000"></div>
<div class="abs" style="left:46px;top:690px;width:230px;height:1px;background:#000"></div>
<div class="abs" style="left:466px;top:690px;width:479px;height:1px;background:#000"></div>
<div class="abs" style="left:1045px;top:690px;width:807px;height:1px;background:#000"></div>
<div class="abs" style="left:46px;top:711px;width:230px;height:1px;background:#000"></div>
<div class="abs" style="left:466px;top:711px;width:479px;height:1px;background:#000"></div>
<div class="abs" style="left:1045px;top:711px;width:807px;height:1px;background:#000"></div>
<div class="abs" style="left:46px;top:732px;width:230px;height:1px;background:#000"></div>
<div class="abs" style="left:466px;top:732px;width:479px;height:1px;background:#000"></div>
<div class="abs" style="left:1045px;top:732px;width:807px;height:1px;background:#000"></div>
<div class="abs" style="left:174px;top:480px;width:1px;height:253px;background:#000"></div>
<div class="abs" style="left:275px;top:480px;width:1px;height:253px;background:#000"></div>
<div class="abs" style="left:466px;top:480px;width:1px;height:253px;background:#000"></div>
<div class="abs" style="left:730px;top:480px;width:1px;height:253px;background:#000"></div>
<div class="abs" style="left:944px;top:480px;width:1px;height:253px;background:#000"></div>
<div class="abs" style="left:1045px;top:480px;width:1px;height:253px;background:#000"></div>
<div class="abs" style="left:1146px;top:480px;width:1px;height:253px;background:#000"></div>
<div class="abs" style="left:1387px;top:480px;width:1px;height:253px;background:#000"></div>
<div class="abs" style="left:1646px;top:480px;width:1px;height:253px;background:#000"></div>
<div class="abs" style="left:1747px;top:480px;width:1px;height:253px;background:#000"></div>
<div class="abs" style="left:1848px;top:480px;width:1px;height:253px;background:#000"></div>
<div class="c" style="left:46px;top:166px;width:128px;height:20px;font-weight:bold;"><span>DATE APPLIED</span></div>
<div class="c" style="left:175px;top:166px;width:100px;height:20px;font-weight:bold;"><span>NAME</span></div>
<div class="c" style="left:276px;top:166px;width:190px;height:20px;font-weight:bold;"><span>POSITION</span></div>
<div class="c" style="left:467px;top:166px;width:263px;height:20px;font-weight:bold;"><span>EMAIL</span></div>
<div class="c" style="left:731px;top:166px;width:213px;height:20px;font-weight:bold;"><span>CONTACT NUMBER</span></div>
<div class="c" style="left:945px;top:166px;width:100px;height:20px;font-weight:bold;"><span>YEARS EXPERIENCE</span></div>
<div class="c" style="left:1046px;top:166px;width:100px;height:20px;font-weight:bold;"><span>RATE</span></div>
<div class="c" style="left:1147px;top:166px;width:240px;height:20px;font-weight:bold;"><span>NOTES</span></div>
<div class="c" style="left:175px;top:187px;width:100px;height:20px;"><span>Ruben</span></div>
<div class="c" style="left:276px;top:187px;width:190px;height:20px;"><span>BERGEN FOOD TRUCK</span></div>
<div class="c" style="left:467px;top:187px;width:263px;height:20px;"><span>roumainruben09@gmail.com</span></div>
<div class="c" style="left:731px;top:187px;width:213px;height:20px;"><span>646-956-9919</span></div>
<div class="c" style="left:175px;top:208px;width:100px;height:20px;"><span>Atika Mysha</span></div>
<div class="c" style="left:276px;top:208px;width:190px;height:20px;"><span>FLORIDA FOOD TRUCK</span></div>
<div class="c" style="left:731px;top:208px;width:213px;height:20px;"><span>813 263 3978</span></div>
<div class="c" style="left:46px;top:229px;width:128px;height:20px;text-align:right;"><span>4/19/2025 6:38:05</span></div>
<div class="c" style="left:175px;top:229px;width:100px;height:20px;"><span>Crystal loadholt</span></div>
<div class="c" style="left:276px;top:229px;width:190px;height:20px;"><span>FLORIDA FOOD TRUCK</span></div>
<div class="c" style="left:467px;top:229px;width:263px;height:20px;"><span>Cloadholt1984@gmail.com</span></div>
<div class="c" style="left:731px;top:229px;width:213px;height:20px;"><span>7272228805</span></div>
<div class="c" style="left:945px;top:229px;width:100px;height:20px;"><span>3 years</span></div>
<div class="c" style="left:1046px;top:229px;width:100px;height:20px;"><span>15</span></div>
<div class="c" style="left:1147px;top:229px;width:240px;height:20px;"><span>invite to zoom</span></div>
<div class="c" style="left:46px;top:250px;width:128px;height:20px;text-align:right;"><span>4/30/2025 2:09:38</span></div>
<div class="c" style="left:175px;top:250px;width:100px;height:20px;"><span>Matthew Bates</span></div>
<div class="c" style="left:276px;top:250px;width:190px;height:20px;"><span>FLORIDA FOOD TRUCK</span></div>
<div class="c" style="left:467px;top:250px;width:263px;height:20px;"><span>matthewbates52177@gmail.com</span></div>
<div class="c" style="left:731px;top:250px;width:213px;height:20px;"><span>727-623-1807</span></div>
<div class="c" style="left:945px;top:250px;width:100px;height:20px;"><span>16 years</span></div>
<div class="c" style="left:1046px;top:250px;width:100px;height:20px;"><span>Negotiable</span></div>
<div class="c" style="left:46px;top:271px;width:128px;height:20px;text-align:right;"><span>5/16/2025 10:59:14</span></div>
<div class="c" style="left:175px;top:271px;width:100px;height:20px;"><span>Kailea Tilden</span></div>
<div class="c" style="left:276px;top:271px;width:190px;height:20px;"><span>BU DANCE INSTRUCTOR</span></div>
<div class="c" style="left:467px;top:271px;width:263px;height:20px;"><span>kailea.tilden@gmail.com</span></div>
<div class="c" style="left:731px;top:271px;width:213px;height:20px;"><span>4175277761</span></div>
<div class="c" style="left:945px;top:271px;width:100px;height:20px;"><span>10+ years</span></div>
<div class="c" style="left:46px;top:292px;width:128px;height:20px;text-align:right;"><span>5/16/2025 10:59:14</span></div>
<div class="c" style="left:175px;top:292px;width:100px;height:20px;"><span>Kailea Tilden</span></div>
<div class="c" style="left:276px;top:292px;width:190px;height:20px;"><span>OU DANCE INSTRUCTOR</span></div>
<div class="c" style="left:467px;top:292px;width:263px;height:20px;"><span>kailea.tilden@gmail.com</span></div>
<div class="c" style="left:731px;top:292px;width:213px;height:20px;"><span>4175277761</span></div>
<div class="c" style="left:945px;top:292px;width:100px;height:20px;"><span>10+ years</span></div>
<div class="c" style="left:46px;top:313px;width:128px;height:20px;text-align:right;"><span>5/16/2025 12:23:34</span></div>
<div class="c" style="left:175px;top:313px;width:100px;height:20px;"><span>Shaunteria Mackey</span></div>
<div class="c" style="left:276px;top:313px;width:190px;height:20px;"><span>BU DANCE INSTRUCTOR</span></div>
<div class="c" style="left:467px;top:313px;width:263px;height:20px;"><span>nshaunteria@gmail.com</span></div>
<div class="c" style="left:731px;top:313px;width:213px;height:20px;"><span>4074592069</span></div>
<div class="c" style="left:945px;top:313px;width:100px;height:20px;"><span>10+ years</span></div>
<div class="c" style="left:46px;top:334px;width:128px;height:20px;text-align:right;"><span>5/16/2025 12:23:34</span></div>
<div class="c" style="left:175px;top:334px;width:100px;height:20px;"><span>Shaunteria Mackey</span></div>
<div class="c" style="left:276px;top:334px;width:190px;height:20px;"><span>OU DANCE INSTRUCTOR</span></div>
<div class="c" style="left:467px;top:334px;width:263px;height:20px;"><span>nshaunteria@gmail.com</span></div>
<div class="c" style="left:731px;top:334px;width:213px;height:20px;"><span>4074592069</span></div>
<div class="c" style="left:945px;top:334px;width:100px;height:20px;"><span>10+ years</span></div>
<div class="c" style="left:46px;top:355px;width:128px;height:20px;text-align:right;"><span>5/18/2025 19:09:38</span></div>
<div class="c" style="left:175px;top:355px;width:100px;height:20px;"><span>Lidiane Mambrini</span></div>
<div class="c" style="left:276px;top:355px;width:190px;height:20px;"><span>BU DANCE INSTRUCTOR</span></div>
<div class="c" style="left:467px;top:355px;width:263px;height:20px;"><span>lidianemambrini@gmail.com</span></div>
<div class="c" style="left:731px;top:355px;width:213px;height:20px;"><span>734-545-2876</span></div>
<div class="c" style="left:945px;top:355px;width:100px;height:20px;"><span>10+ years</span></div>
<div class="c" style="left:46px;top:376px;width:128px;height:20px;text-align:right;"><span>5/18/2025 19:09:38</span></div>
<div class="c" style="left:175px;top:376px;width:100px;height:20px;"><span>Lidiane Mambrini</span></div>
<div class="c" style="left:276px;top:376px;width:190px;height:20px;"><span>OU DANCE INSTRUCTOR</span></div>
<div class="c" style="left:467px;top:376px;width:263px;height:20px;"><span>lidianemambrini@gmail.com</span></div>
<div class="c" style="left:731px;top:376px;width:213px;height:20px;"><span>734-545-2876</span></div>
<div class="c" style="left:945px;top:376px;width:100px;height:20px;"><span>10+ years</span></div>
<div class="c" style="left:46px;top:397px;width:128px;height:20px;text-align:right;"><span>5/21/2025 22:33:57</span></div>
<div class="c" style="left:175px;top:397px;width:100px;height:20px;"><span>Danny Donati</span></div>
<div class="c" style="left:276px;top:397px;width:190px;height:20px;"><span>BU DRUM INSTRUCTOR</span></div>
<div class="c" style="left:467px;top:397px;width:263px;height:20px;"><span>dannydonatimusic@gmail.com</span></div>
<div class="c" style="left:731px;top:397px;width:213px;height:20px;"><span>4078206561</span></div>
<div class="c" style="left:945px;top:397px;width:100px;height:20px;"><span>10+ years</span></div>
<div class="c" style="left:46px;top:418px;width:128px;height:20px;text-align:right;"><span>5/22/2025 22:37:22</span></div>
<div class="c" style="left:175px;top:418px;width:100px;height:20px;"><span>Michael O’Sullivan</span></div>
<div class="c" style="left:276px;top:418px;width:190px;height:20px;"><span>FLORIDA FOOD TRUCK</span></div>
<div class="c" style="left:467px;top:418px;width:263px;height:20px;"><span>osomike23@hotmail.com</span></div>
<div class="c" style="left:731px;top:418px;width:213px;height:20px;"><span>2192566651</span></div>
<div class="c" style="left:1046px;top:418px;width:100px;height:20px;"><span>$19</span></div>
<div class="c" style="left:46px;top:439px;width:128px;height:20px;text-align:right;"><span>5/23/2025 5:13:58</span></div>
<div class="c" style="left:175px;top:439px;width:100px;height:20px;"><span>Dustin Lewis</span></div>
<div class="c" style="left:276px;top:439px;width:190px;height:20px;"><span>BU DRUM INSTRUCTOR</span></div>
<div class="c" style="left:467px;top:439px;width:263px;height:20px;"><span>Dustin.lewis.comp@gmail.com</span></div>
<div class="c" style="left:731px;top:439px;width:213px;height:20px;"><span>5136303089</span></div>
<div class="c" style="left:945px;top:439px;width:100px;height:20px;"><span>1-5 years</span></div>
<div class="c" style="left:46px;top:460px;width:128px;height:20px;text-align:right;"><span>5/24/2025 21:56:56</span></div>
<div class="c" style="left:175px;top:460px;width:100px;height:20px;"><span>Justin Dixon</span></div>
<div class="c" style="left:276px;top:460px;width:190px;height:20px;"><span>FLORIDA FOOD TRUCK</span></div>
<div class="c" style="left:467px;top:460px;width:263px;height:20px;"><span>jussfundamental@gmail.com</span></div>
<div class="c" style="left:731px;top:460px;width:213px;height:20px;"><span>6468561564</span></div>
<div class="c" style="left:1046px;top:460px;width:100px;height:20px;"><span>19</span></div>
<div class="c" style="left:46px;top:481px;width:128px;height:20px;text-align:right;"><span>5/26/2025 19:41:02</span></div>
<div class="c" style="left:175px;top:481px;width:100px;height:20px;"><span>William alvarez</span></div>
<div class="c" style="left:276px;top:481px;width:190px;height:20px;"><span>FLORIDA FOOD TRUCK</span></div>
<div class="c" style="left:467px;top:481px;width:263px;height:20px;"><span>will.alvarez45@yahoo.com</span></div>
<div class="c" style="left:731px;top:481px;width:213px;height:20px;"><span>8133977489</span></div>
<div class="c" style="left:1046px;top:481px;width:100px;height:20px;"><span>$18</span></div>
<div class="c" style="left:46px;top:502px;width:128px;height:20px;text-align:right;"><span>5/27/2025 2:44:19</span></div>
<div class="c" style="left:175px;top:502px;width:100px;height:20px;"><span>Ana Rose Pellano</span></div>
<div class="c" style="left:276px;top:502px;width:190px;height:20px;"><span>FLORIDA FOOD TRUCK</span></div>
<div class="c" style="left:467px;top:502px;width:263px;height:20px;"><span>anarosepellano031995@gmail.com</span></div>
<div class="c" style="left:731px;top:502px;width:213px;height:20px;"><span>+639392478792</span></div>
<div class="c" style="left:1046px;top:502px;width:100px;height:20px;"><span>Per hour</span></div>
<div class="c" style="left:46px;top:523px;width:128px;height:20px;text-align:right;color:#4a4a4a;"><span>5/28/2025 11:48:59</span></div>
<div class="c" style="left:175px;top:523px;width:100px;height:20px;color:#4a4a4a;"><span>Jasmine Hendley</span></div>
<div class="c" style="left:276px;top:523px;width:190px;height:20px;"><span>OU DANCE INSTRUCTOR</span></div>
<div class="c" style="left:467px;top:523px;width:263px;height:20px;color:#4a4a4a;"><span>jasminehendley7@gmail.com</span></div>
<div class="c" style="left:731px;top:523px;width:213px;height:20px;color:#4a4a4a;"><span>678-427-1634</span></div>
<div class="c" style="left:945px;top:523px;width:100px;height:20px;color:#4a4a4a;"><span>6-10 years</span></div>
<div class="c" style="left:46px;top:544px;width:128px;height:20px;text-align:right;"><span>5/29/2025 2:27:57</span></div>
<div class="c" style="left:175px;top:544px;width:100px;height:20px;"><span>Jada Bethea</span></div>
<div class="c" style="left:276px;top:544px;width:190px;height:20px;"><span>FLORIDA FOOD TRUCK</span></div>
<div class="c" style="left:467px;top:544px;width:263px;height:20px;"><span>jadabethea123@gmail.com</span></div>
<div class="c" style="left:731px;top:544px;width:213px;height:20px;"><span>8636185520</span></div>
<div class="c" style="left:1046px;top:544px;width:100px;height:20px;"><span>17</span></div>
<div class="c" style="left:46px;top:565px;width:128px;height:20px;text-align:right;color:#4a4a4a;"><span>5/30/2025 0:43:05</span></div>
<div class="c" style="left:175px;top:565px;width:100px;height:20px;color:#4a4a4a;"><span>ryandashawnrobinson@gmail.com</span></div>
<div class="c" style="left:276px;top:565px;width:190px;height:20px;"><span>BU FOODTRUCK</span></div>
<div class="c" style="left:467px;top:565px;width:263px;height:20px;color:#4a4a4a;"><span>Ryan Robinson</span></div>
<div class="c" style="left:731px;top:565px;width:213px;height:20px;color:#4a4a4a;"><span>3474374324</span></div>
<div class="c" style="left:945px;top:565px;width:100px;height:20px;color:#4a4a4a;"><span>8 years</span></div>
<div class="c" style="left:1046px;top:565px;width:100px;height:20px;color:#4a4a4a;"><span>$20</span></div>
<div class="c" style="left:46px;top:586px;width:128px;height:20px;text-align:right;"><span>5/30/2025 1:23:57</span></div>
<div class="c" style="left:175px;top:586px;width:100px;height:20px;"><span>Amor Kendrick</span></div>
<div class="c" style="left:276px;top:586px;width:190px;height:20px;"><span>FLORIDA FOOD TRUCK</span></div>
<div class="c" style="left:467px;top:586px;width:263px;height:20px;"><span>amorkendrick2@gmail.com</span></div>
<div class="c" style="left:731px;top:586px;width:213px;height:20px;"><span>7867345895</span></div>
<div class="c" style="left:1046px;top:586px;width:100px;height:20px;"><span>14</span></div>
<div class="c" style="left:1147px;top:586px;width:240px;height:20px;"><span>email for interview</span></div>
<div class="c" style="left:46px;top:607px;width:128px;height:20px;text-align:right;"><span>5/30/2025 5:52:46</span></div>
<div class="c" style="left:175px;top:607px;width:100px;height:20px;"><span>Zion Keebler</span></div>
<div class="c" style="left:276px;top:607px;width:190px;height:20px;"><span>FLORIDA FOOD TRUCK</span></div>
<div class="c" style="left:467px;top:607px;width:263px;height:20px;"><span>Zyonseps@gmail.com</span></div>
<div class="c" style="left:731px;top:607px;width:213px;height:20px;"><span>8637126858</span></div>
<div class="c" style="left:945px;top:607px;width:100px;height:20px;"><span>3 years</span></div>
<div class="c" style="left:1046px;top:607px;width:100px;height:20px;"><span>14</span></div>
<div class="c" style="left:1147px;top:607px;width:240px;height:20px;"><span>email for interview</span></div>
<div class="c" style="left:46px;top:628px;width:128px;height:20px;text-align:right;color:#4a4a4a;"><span>6/1/2025 1:52:50</span></div>
<div class="c" style="left:175px;top:628px;width:100px;height:20px;color:#4a4a4a;"><span>sharaequeen@gmail.com</span></div>
<div class="c" style="left:276px;top:628px;width:190px;height:20px;"><span>BU FOODTRUCK</span></div>
<div class="c" style="left:467px;top:628px;width:263px;height:20px;color:#4a4a4a;"><span>Tainisha Corbett</span></div>
<div class="c" style="left:731px;top:628px;width:213px;height:20px;color:#4a4a4a;"><span>718-574-9034</span></div>
<div class="c" style="left:46px;top:649px;width:128px;height:20px;text-align:right;"><span>6/5/2025 3:39:12</span></div>
<div class="c" style="left:175px;top:649px;width:100px;height:20px;"><span>Adam Maldonado</span></div>
<div class="c" style="left:276px;top:649px;width:190px;height:20px;"><span>FLORIDA FOOD TRUCK</span></div>
<div class="c" style="left:945px;top:649px;width:100px;height:20px;"><span>33 years</span></div>
<div class="c" style="left:1046px;top:649px;width:100px;height:20px;"><span>18-20</span></div>
<div class="c" style="left:46px;top:670px;width:128px;height:20px;text-align:right;"><span>6/5/2025 3:50:25</span></div>
<div class="c" style="left:175px;top:670px;width:100px;height:20px;"><span>Christopher Jerome</span></div>
<div class="c" style="left:276px;top:670px;width:190px;height:20px;"><span>FLORIDA FOOD TRUCK</span></div>
<div class="c" style="left:467px;top:670px;width:263px;height:20px;"><span>therealrappinrev@yahoo.com</span></div>
<div class="c" style="left:731px;top:670px;width:213px;height:20px;"><span>(417) 849-9346</span></div>
<div class="c" style="left:1046px;top:670px;width:100px;height:20px;"><span>Anything that works</span></div>
<div class="c" style="left:46px;top:691px;width:128px;height:20px;text-align:right;"><span>6/5/2025 9:38:11</span></div>
<div class="c" style="left:175px;top:691px;width:100px;height:20px;"><span>Alyssa Rios</span></div>
<div class="c" style="left:276px;top:691px;width:190px;height:20px;"><span>FLORIDA FOOD TRUCK</span></div>
<div class="c" style="left:467px;top:691px;width:263px;height:20px;"><span>lyssarmartini94@gmail.com</span></div>
<div class="c" style="left:731px;top:691px;width:213px;height:20px;"><span>7027014322</span></div>
<div class="c" style="left:1046px;top:691px;width:100px;height:20px;"><span>17</span></div>
<div class="c" style="left:46px;top:712px;width:128px;height:20px;text-align:right;color:#4a4a4a;"><span>6/5/2025 9:38:24</span></div>
<div class="c" style="left:175px;top:712px;width:100px;height:20px;color:#4a4a4a;"><span>Bjjones0892@gmail.com</span></div>
<div class="c" style="left:276px;top:712px;width:190px;height:20px;"><span>BU FOODTRUCK</span></div>
<div class="c" style="left:467px;top:712px;width:263px;height:20px;color:#4a4a4a;"><span>Alfred Jones</span></div>
<div class="c" style="left:731px;top:712px;width:213px;height:20px;color:#4a4a4a;"><span>3477779968</span></div>
<div class="c" style="left:945px;top:712px;width:100px;height:20px;color:#4a4a4a;"><span>25 years</span></div>
<div class="c" style="left:46px;top:733px;width:128px;height:20px;text-align:right;"><span>6/6/2025 6:50:48</span></div>
<div class="c" style="left:175px;top:733px;width:100px;height:20px;"><span>Ginger Europe</span></div>
<div class="c" style="left:276px;top:733px;width:190px;height:20px;"><span>FLORIDA FOOD TRUCK</span></div>
<div class="c" style="left:467px;top:733px;width:263px;height:20px;"><span>gingereurope59@gmail.com</span></div>
<div class="c" style="left:731px;top:733px;width:213px;height:20px;"><span>8635000626</span></div>
<div class="c" style="left:945px;top:733px;width:100px;height:20px;"><span>40 years</span></div>
<div class="c" style="left:1046px;top:733px;width:100px;height:20px;"><span>16</span></div>
<div class="c" style="left:46px;top:754px;width:128px;height:20px;text-align:right;"><span>6/6/2025 9:08:26</span></div>
<div class="c" style="left:175px;top:754px;width:100px;height:20px;"><span>Jamari Woods</span></div>
<div class="c" style="left:276px;top:754px;width:190px;height:20px;"><span>FLORIDA FOOD TRUCK</span></div>
<div class="c" style="left:467px;top:754px;width:263px;height:20px;"><span>jlwoods6702@gmail.com</span></div>
<div class="c" style="left:731px;top:754px;width:213px;height:20px;"><span>6892512394</span></div>
<div class="c" style="left:1046px;top:754px;width:100px;height:20px;"><span>13-16</span></div>
<div class="c" style="left:46px;top:775px;width:128px;height:20px;text-align:right;"><span>6/7/2025 3:14:54</span></div>
<div class="c" style="left:175px;top:775px;width:100px;height:20px;"><span>Rosanna  Abbott</span></div>
<div class="c" style="left:276px;top:775px;width:190px;height:20px;"><span>FLORIDA FOOD TRUCK</span></div>
<div class="c" style="left:467px;top:775px;width:263px;height:20px;"><span>rosannamae33@gmail.com</span></div>
<div class="c" style="left:731px;top:775px;width:213px;height:20px;"><span>8133649760</span></div>
<div class="c" style="left:1046px;top:775px;width:100px;height:20px;"><span>13</span></div>
<div class="c" style="left:46px;top:796px;width:128px;height:20px;text-align:right;color:#4a4a4a;"><span>6/7/2025 3:43:22</span></div>
<div class="c" style="left:175px;top:796px;width:100px;height:20px;color:#4a4a4a;"><span>Nicole Chung</span></div>
<div class="c" style="left:276px;top:796px;width:190px;height:20px;"><span>OU DRUM INSTRUCTOR</span></div>
<div class="c" style="left:467px;top:796px;width:263px;height:20px;color:#4a4a4a;"><span>nicolechung1014@gmail.com</span></div>
<div class="c" style="left:731px;top:796px;width:213px;height:20px;color:#4a4a4a;"><span>407-932-8443</span></div>
<div class="c" style="left:945px;top:796px;width:100px;height:20px;color:#4a4a4a;"><span>1-5 years</span></div>
<div class="c" style="left:46px;top:817px;width:128px;height:20px;text-align:right;"><span>6/13/2025 15:59:11</span></div>
<div class="c" style="left:175px;top:817px;width:100px;height:20px;"><span>Destini Mccabe</span></div>
<div class="c" style="left:276px;top:817px;width:190px;height:20px;"><span>FLORIDA FOOD TRUCK</span></div>
<div class="c" style="left:467px;top:817px;width:263px;height:20px;"><span>boogieboo824@gmail.com</span></div>
<div class="c" style="left:731px;top:817px;width:213px;height:20px;"><span>8134488113</span></div>
<div class="c" style="left:945px;top:817px;width:100px;height:20px;"><span>9 years</span></div>
<div class="c" style="left:1046px;top:817px;width:100px;height:20px;"><span>19</span></div>
<div class="c" style="left:46px;top:838px;width:128px;height:20px;text-align:right;"><span>6/20/2025 21:00:08</span></div>
<div class="c" style="left:175px;top:838px;width:100px;height:20px;"><span>Shiloh Nunez</span></div>
<div class="c" style="left:276px;top:838px;width:190px;height:20px;"><span>EVENT SERVER NY</span></div>
<div class="c" style="left:467px;top:838px;width:263px;height:20px;color:#4a4a4a;"><span>Shilohnun6@gmail.com</span></div>
<div class="c" style="left:731px;top:838px;width:213px;height:20px;color:#4a4a4a;"><span>9292877553</span></div>
<div class="c" style="left:1046px;top:838px;width:100px;height:20px;"><span>17</span></div>
<div class="ch" style="left:46px;width:128px;background:#d3e3fd;color:#041e49;font-weight:bold">A</div>
<div class="ch" style="left:175px;width:100px;background:#ffffff;color:#444746;font-weight:normal">B</div>
<div class="ch" style="left:276px;width:190px;background:#ffffff;color:#444746;font-weight:normal">C</div>
<div class="ch" style="left:467px;width:263px;background:#ffffff;color:#444746;font-weight:normal">D</div>
<div class="ch" style="left:731px;width:213px;background:#ffffff;color:#444746;font-weight:normal">E</div>
<div class="ch" style="left:945px;width:100px;background:#ffffff;color:#444746;font-weight:normal">F</div>
<div class="ch" style="left:1046px;width:100px;background:#ffffff;color:#444746;font-weight:normal">G</div>
<div class="ch" style="left:1147px;width:240px;background:#ffffff;color:#444746;font-weight:normal">H</div>
<div class="ch" style="left:1388px;width:258px;background:#ffffff;color:#444746;font-weight:normal">I</div>
<div class="ch" style="left:1647px;width:100px;background:#ffffff;color:#444746;font-weight:normal">J</div>
<div class="ch" style="left:1748px;width:100px;background:#ffffff;color:#444746;font-weight:normal">K</div>
<div class="chl" style="left:174px"></div>
<div class="chl" style="left:275px"></div>
<div class="chl" style="left:466px"></div>
<div class="chl" style="left:730px"></div>
<div class="chl" style="left:944px"></div>
<div class="chl" style="left:1045px"></div>
<div class="chl" style="left:1146px"></div>
<div class="chl" style="left:1387px"></div>
<div class="chl" style="left:1646px"></div>
<div class="chl" style="left:1747px"></div>
<div class="chl" style="left:1848px"></div>
<div class="abs" style="left:45px;top:165px;width:130px;height:22px;border:2px solid #1a73e8"></div>
<div class="abs" style="left:170px;top:182px;width:10px;height:10px;border-radius:50%;background:#0b57d0;border:1px solid #fff"></div>
<div class="abs" style="left:0;top:165px;width:1851px;height:1px;background:#c7c7c7"></div>
<div class="abs" style="left:45px;top:165px;width:1px;height:688px;background:#c7c7c7"></div>
<!-- selection -->

</body></html>
